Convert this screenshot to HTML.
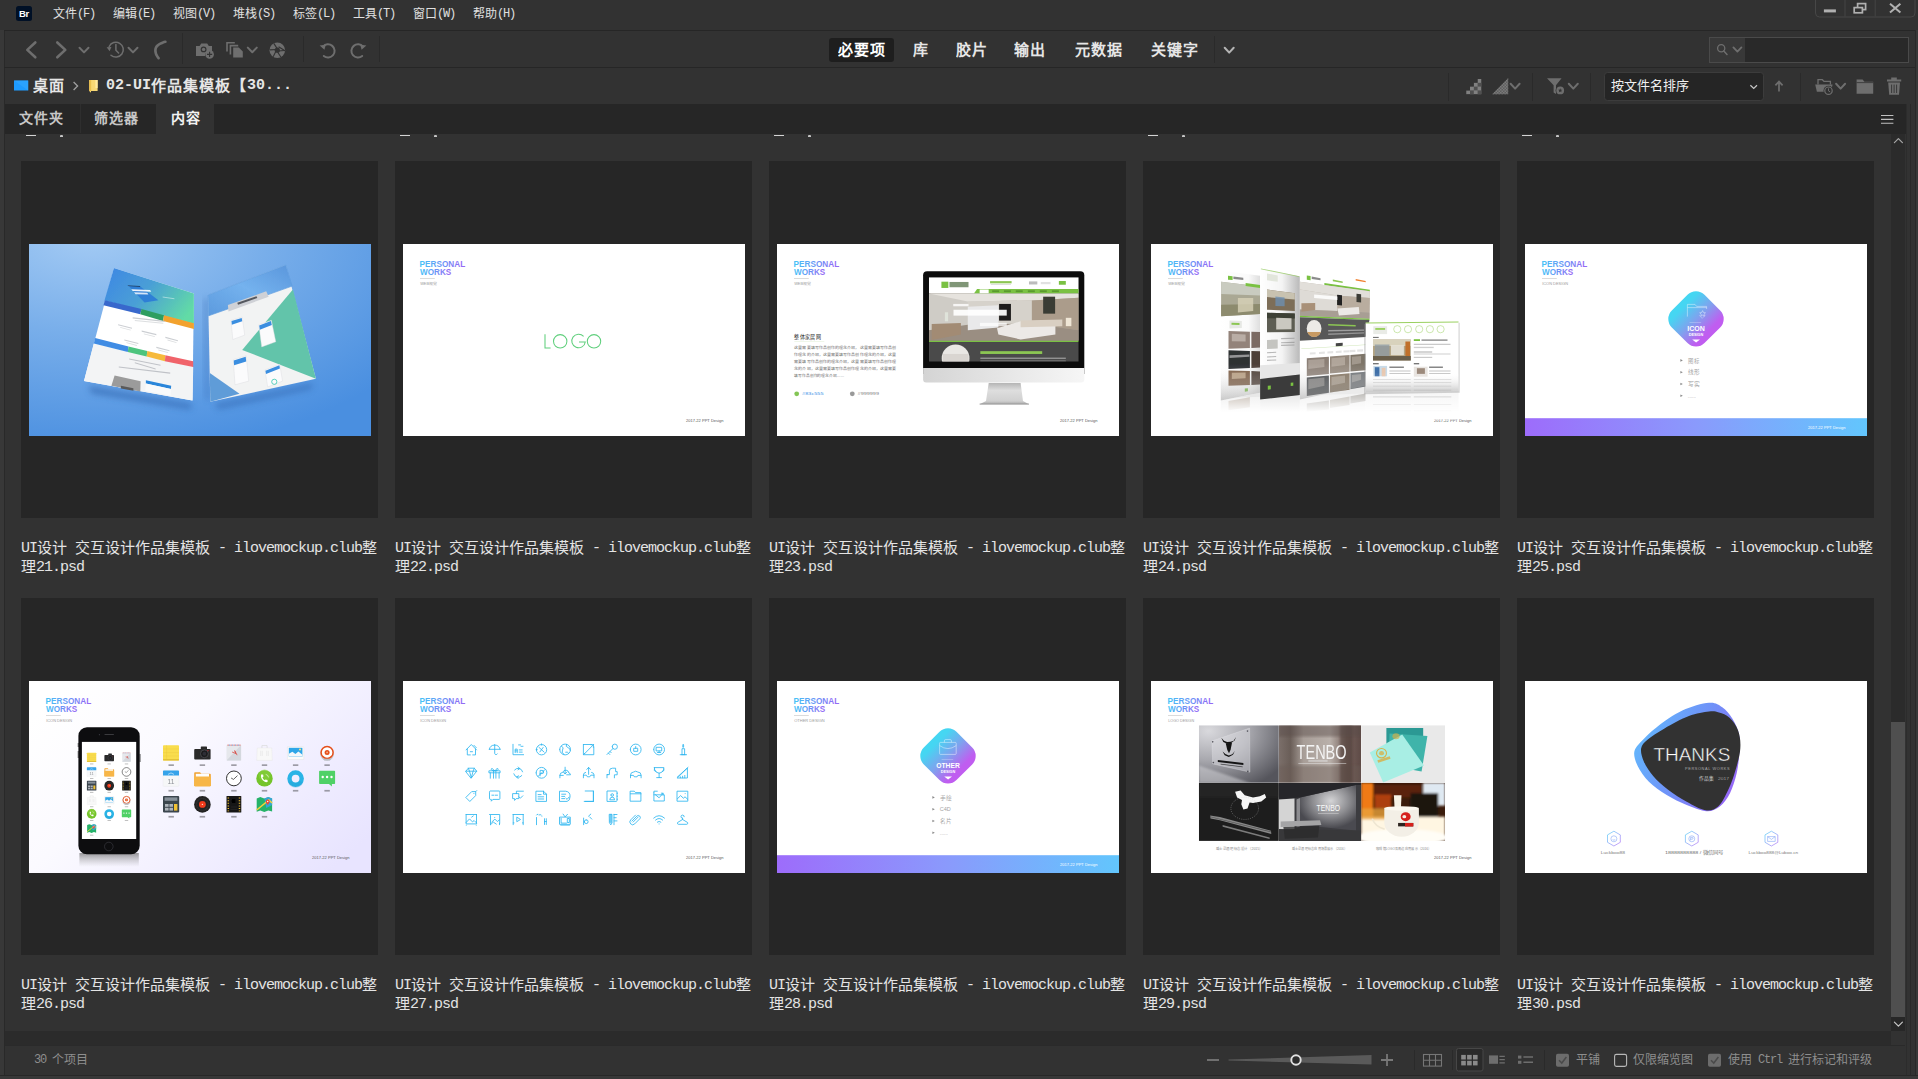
<!DOCTYPE html>
<html lang="zh-CN">
<head>
<meta charset="utf-8">
<title>Adobe Bridge</title>
<style>
html,body{margin:0;padding:0;}
body{width:1918px;height:1079px;background:#323232;position:relative;overflow:hidden;
  font-family:"Liberation Mono",monospace;color:#d2d2d2;}
.a{position:absolute;}
.k{display:inline-block;overflow:hidden;white-space:nowrap;vertical-align:top;font-family:"Liberation Sans",sans-serif;letter-spacing:0;text-align:justify;text-align-last:justify;}
svg{position:absolute;display:block;overflow:hidden;}
/* ---- menu ---- */
.menu{left:0;top:0;width:1918px;height:30px;background:#323232;}
.mi{top:6px;height:16px;line-height:16px;font-size:12px;letter-spacing:-1.2px;color:#e0e0e0;white-space:nowrap;}
.mi .k{font-size:12px;height:16px;line-height:16px;}
/* ---- toolbar / path ---- */
.hl{left:4px;width:1912px;height:1px;background:#262626;}
.ws{top:37px;height:25px;line-height:25px;font-size:15px;color:#e6e6e6;white-space:nowrap;font-weight:bold;}
.ws .k{font-size:15px;height:25px;line-height:25px;}
.path{top:76px;height:20px;line-height:20px;font-size:15px;color:#e6e6e6;white-space:nowrap;font-weight:bold;}
.path .k{font-size:15px;height:20px;line-height:20px;}
/* ---- tabs ---- */
.tabbar{left:5px;top:104px;width:1901px;height:30px;background:#262626;}
.tab{top:104px;height:30px;line-height:29px;font-size:14px;color:#c4c4c4;text-align:center;white-space:nowrap;font-weight:bold;}
.tab .k{font-size:14px;height:30px;line-height:29px;}
/* ---- grid ---- */
.cell{width:357px;height:357px;background:#262626;}
.lbl{width:372px;height:38px;line-height:19px;font-size:15px;letter-spacing:-1px;color:#e4e4e4;white-space:nowrap;overflow:hidden;}
.lbl .k{font-size:15px;height:19px;line-height:19px;position:relative;top:-1px;}
.th{width:342px;height:192px;background:#fff;overflow:hidden;}
.th svg{left:0;top:0;}
/* ---- status ---- */
.st{top:1052px;height:16px;line-height:16px;font-size:12px;letter-spacing:-1.2px;color:#8e8e8e;white-space:nowrap;}
.st .k{font-size:12px;height:16px;line-height:16px;}

</style>
</head>
<body>
<div class="a menu"></div>
<div class="a" style="left:16px;top:6px;width:16px;height:15px;background:#001026;border-radius:2.5px;"></div>
<div class="a" style="left:19px;top:9px;width:12px;height:10px;line-height:10px;font-family:'Liberation Sans',sans-serif;font-weight:bold;font-size:9.5px;color:#fff;letter-spacing:-0.3px;">Br</div>
<div class="a mi" style="left:53px;"><span class="k" style="width:24px">文件</span>(F)</div>
<div class="a mi" style="left:113px;"><span class="k" style="width:24px">编辑</span>(E)</div>
<div class="a mi" style="left:173px;"><span class="k" style="width:24px">视图</span>(V)</div>
<div class="a mi" style="left:233px;"><span class="k" style="width:24px">堆栈</span>(S)</div>
<div class="a mi" style="left:293px;"><span class="k" style="width:24px">标签</span>(L)</div>
<div class="a mi" style="left:353px;"><span class="k" style="width:24px">工具</span>(T)</div>
<div class="a mi" style="left:413px;"><span class="k" style="width:24px">窗口</span>(W)</div>
<div class="a mi" style="left:473px;"><span class="k" style="width:24px">帮助</span>(H)</div>
<svg class="a" style="left:1813px;top:0px" width="104" height="20" viewBox="0 0 104 20"><path d="M2.5 -1 V13 Q2.5 17 6.5 17 H98 Q102 17 102 13 V-1" fill="#323232" stroke="#474747" stroke-width="1"/><path d="M32 0 V16.5 M62.2 0 V16.5" stroke="#444" stroke-width="1"/><rect x="10.9" y="9.4" width="12" height="3" fill="#b0b0b0"/><rect x="44.6" y="3.6" width="8" height="6" fill="none" stroke="#b0b0b0" stroke-width="1.7"/><rect x="41.2" y="7.6" width="8.2" height="5.2" fill="#323232" stroke="#b0b0b0" stroke-width="1.7"/><path d="M77 3.8 L87.4 12.6 M87.4 3.8 L77 12.6" stroke="#b0b0b0" stroke-width="2"/></svg>
<div class="a" style="left:0;top:30px;width:4px;height:1049px;background:#383838;"></div>
<div class="a" style="left:4px;top:30px;width:1px;height:1046px;background:#292929;"></div>
<div class="a hl" style="top:30px;"></div>
<div class="a hl" style="top:67px;"></div>
<svg class="a" style="left:0px;top:30px" width="400" height="38" viewBox="0 0 400 38"><path d="M35.3 12.5 L27.3 19.9 L35.3 27.3" fill="none" stroke="#6e6e6e" stroke-width="2.6" stroke-linecap="round" stroke-linejoin="round" /><path d="M57.3 12.5 L65.3 19.9 L57.3 27.3" fill="none" stroke="#6e6e6e" stroke-width="2.6" stroke-linecap="round" stroke-linejoin="round" /><path d="M79.5 17.8 L84 22.4 L88.5 17.8" fill="none" stroke="#6e6e6e" stroke-width="2" stroke-linecap="round" stroke-linejoin="round"/><path d="M109.2 16.5 A7.4 7.4 0 1 1 111 25.2" fill="none" stroke="#6e6e6e" stroke-width="1.5" stroke-linecap="round" stroke-linejoin="round" /><path d="M106.6 17.2 L111.4 17 L109.6 21.2 Z" fill="#6e6e6e"/><path d="M115.9 14.5 V20.2 L118.6 23" fill="none" stroke="#6e6e6e" stroke-width="1.5" stroke-linecap="round" stroke-linejoin="round" /><path d="M128.5 17.8 L133 22.4 L137.5 17.8" fill="none" stroke="#6e6e6e" stroke-width="2" stroke-linecap="round" stroke-linejoin="round"/><path d="M165.4 11.8 Q155.2 14.4 155.4 20.6 Q155.6 24.6 158.6 28.2" fill="none" stroke="#6e6e6e" stroke-width="2.7" stroke-linecap="round" stroke-dasharray="2.4 .5"/><path d="M182.5 3 V34" stroke="#2a2a2a" stroke-width="1"/><path d="M196 16 h3.6 l1.6 -2.4 h6 l1.6 2.4 h3.2 v5.2 a5 5 0 0 0 -7 4.8 h-9 z" fill="#6e6e6e"/><circle cx="203.6" cy="19.4" r="2.9" fill="#323232"/><circle cx="203.6" cy="19.4" r="1.7" fill="#6e6e6e"/><circle cx="209.6" cy="24.4" r="4.3" fill="#6e6e6e"/><path d="M209.6 21.8 v5.2 M207 24.4 h5.2" stroke="#323232" stroke-width="1.1"/><path d="M226.2 12 h8.6 v1.6 h-7 v8 h-1.6 z" fill="#6e6e6e"/><path d="M229.6 14.8 h8.6 v1.6 h-7 v8.2 h-1.6 z" fill="#6e6e6e"/><path d="M233.2 17.4 h5.6 l4 4 v6 h-9.6 z" fill="#6e6e6e"/><path d="M247.8 17.6 L252.3 22.2 L256.8 17.6" fill="none" stroke="#6e6e6e" stroke-width="2" stroke-linecap="round" stroke-linejoin="round"/><circle cx="277.3" cy="20.2" r="7.8" fill="#6e6e6e"/><g stroke="#323232" stroke-width="1.1" fill="none"><path d="M273.8 13.4 L277.8 19.6"/><path d="M281.6 13.8 L275 17.4" transform="rotate(60 277.3 20.2)"/><path d="M273.8 13.4 L277.8 19.6" transform="rotate(120 277.3 20.2)"/><path d="M273.8 13.4 L277.8 19.6" transform="rotate(180 277.3 20.2)"/><path d="M273.8 13.4 L277.8 19.6" transform="rotate(240 277.3 20.2)"/><path d="M273.8 13.4 L277.8 19.6" transform="rotate(300 277.3 20.2)"/></g><circle cx="277.3" cy="20.2" r="2.6" fill="#323232"/><path d="M303.5 6 V32" stroke="#2a2a2a" stroke-width="1"/><path d="M323 16.6 A6.6 6.6 0 1 1 323.8 26" fill="none" stroke="#6e6e6e" stroke-width="2" stroke-linecap="round" stroke-linejoin="round" /><path d="M319.6 15.6 L325.8 14.8 L324.4 19.8 Z" fill="#6e6e6e"/><path d="M363 16.6 A6.6 6.6 0 1 0 362.2 26" fill="none" stroke="#6e6e6e" stroke-width="2" stroke-linecap="round" stroke-linejoin="round" /><path d="M366.4 15.6 L360.2 14.8 L361.6 19.8 Z" fill="#6e6e6e"/><path d="M379.5 6 V32" stroke="#2a2a2a" stroke-width="1"/></svg>
<div class="a" style="left:829px;top:38px;width:65px;height:24px;background:#1e1e1e;border-radius:3px;"></div>
<div class="a ws" style="left:838px;width:48px;color:#ffffff;"><span class="k" style="width:16px">必</span><span class="k" style="width:16px">要</span><span class="k" style="width:16px">项</span></div>
<div class="a ws" style="left:912.5px;width:16px;color:#e6e6e6;"><span class="k" style="width:16px">库</span></div>
<div class="a ws" style="left:955.5px;width:32px;color:#e6e6e6;"><span class="k" style="width:16px">胶</span><span class="k" style="width:16px">片</span></div>
<div class="a ws" style="left:1014px;width:32px;color:#e6e6e6;"><span class="k" style="width:16px">输</span><span class="k" style="width:16px">出</span></div>
<div class="a ws" style="left:1074.5px;width:48px;color:#e6e6e6;"><span class="k" style="width:16px">元</span><span class="k" style="width:16px">数</span><span class="k" style="width:16px">据</span></div>
<div class="a ws" style="left:1150.5px;width:48px;color:#e6e6e6;"><span class="k" style="width:16px">关</span><span class="k" style="width:16px">键</span><span class="k" style="width:16px">字</span></div>
<svg class="a" style="left:1205px;top:30px" width="40" height="38" viewBox="0 0 40 38"><path d="M9.5 6 V33" stroke="#2a2a2a" stroke-width="1"/><path d="M19.7 17.8 L24.2 22.6 L28.7 17.8" fill="none" stroke="#b4b4b4" stroke-width="2" stroke-linecap="round" stroke-linejoin="round"/></svg>
<div class="a" style="left:1709px;top:37px;width:200px;height:26px;background:#292929;border:1px solid #4a4a4a;box-sizing:border-box;"></div>
<div class="a" style="left:1710px;top:38px;width:35px;height:24px;background:#383838;"></div>
<svg class="a" style="left:1710px;top:38px" width="36" height="23" viewBox="0 0 36 23"><circle cx="11.2" cy="10.2" r="3.6" fill="none" stroke="#6e6e6e" stroke-width="1.3"/><path d="M13.8 13 L17 16.4" stroke="#6e6e6e" stroke-width="1.5" stroke-linecap="round"/><path d="M23.4 9.4 L27.4 13.6 L31.4 9.4" fill="none" stroke="#6e6e6e" stroke-width="1.8" stroke-linecap="round" stroke-linejoin="round"/></svg>
<svg class="a" style="left:12px;top:76px" width="20" height="18" viewBox="0 0 20 18"><path d="M2 4.5 h14.2 v10 h-14.2 z" fill="#1e9bff"/><path d="M2 4.5 h14.2 v10 z" fill="#35a8ff" opacity=".55"/></svg>
<div class="a path" style="left:33px;"><span class="k" style="width:16px">桌</span><span class="k" style="width:16px">面</span></div>
<svg class="a" style="left:68px;top:76px" width="16" height="20" viewBox="0 0 16 20"><path d="M5.6 6 L9.6 10 L5.6 14" fill="none" stroke="#a0a0a0" stroke-width="1.3"/></svg>
<svg class="a" style="left:86px;top:76px" width="16" height="20" viewBox="0 0 16 20"><path d="M3.2 4 h8.4 v11 h-6.6 v1.8 l-1.8 -1.8 z" fill="#f7d774"/><path d="M3.2 4 h2 v11 h-2 z" fill="#e9bf4e"/><path d="M9.4 4 h2.2 v8 h-2.2 z" fill="#ffe9a0"/></svg>
<div class="a path" style="left:106px;">02-UI<span class="k" style="width:16px">作</span><span class="k" style="width:16px">品</span><span class="k" style="width:16px">集</span><span class="k" style="width:16px">模</span><span class="k" style="width:16px">板</span><span class="k" style="width:16px">【</span>30...</div>
<svg class="a" style="left:1440px;top:68px" width="470" height="36" viewBox="0 0 470 36"><path d="M8.5 5 V33 M92.5 5 V33 M150.5 5 V33 M360.5 5 V33" stroke="#2a2a2a" stroke-width="1"/><defs><pattern id="ck" width="3" height="3" patternUnits="userSpaceOnUse"><rect width="1.5" height="1.5" fill="#7a7a7a"/><rect x="1.5" y="1.5" width="1.5" height="1.5" fill="#7a7a7a"/></pattern><pattern id="ck2" x="26.2" y="11" width="7.6" height="7.6" patternUnits="userSpaceOnUse"><rect width="7.6" height="7.6" fill="#505050"/><rect x="3.8" width="3.8" height="3.8" fill="#808080"/><rect y="3.8" width="3.8" height="3.8" fill="#808080"/></pattern></defs><path d="M26.2 26.2 V22.4 H30 V18.6 H33.8 V14.8 H37.6 V11 H41.4 V26.2 Z" fill="url(#ck2)"/><path d="M52.2 26.2 L68.2 10.1 V26.2 Z" fill="#5e5e5e"/><path d="M52.2 26.2 L68.2 10.1 V26.2 Z" fill="url(#ck)"/><path d="M70.6 15.8 L75.1 20.6 L79.6 15.8" fill="none" stroke="#6e6e6e" stroke-width="2" stroke-linecap="round" stroke-linejoin="round"/><path d="M107 10.2 h14.6 l-5.6 7 v8.8 l-2.4 -1.6 v-7.2 z" fill="#6e6e6e"/><circle cx="120.2" cy="22.4" r="4.6" fill="#323232"/><circle cx="120.2" cy="22.4" r="3.9" fill="#6e6e6e"/><path d="M120.2 20.3 l.6 1.4 1.5.15 -1.1 1 .3 1.5 -1.3-.8 -1.3.8 .3-1.5 -1.1-1 1.5-.15z" fill="#323232"/><path d="M128.8 15.8 L133.3 20.6 L137.8 15.8" fill="none" stroke="#6e6e6e" stroke-width="2" stroke-linecap="round" stroke-linejoin="round"/><rect x="164.5" y="4.5" width="159" height="28" rx="3" fill="#252525" stroke="#3c3c3c" stroke-width="1"/><path d="M310.4 17.2 L313.7 20.4 L317 17.2" fill="none" stroke="#c8c8c8" stroke-width="1.2"/><path d="M339 23.5 V14 M335.4 17.4 L339 13.6 L342.6 17.4" fill="none" stroke="#6e6e6e" stroke-width="1.7"/><path d="M378 16.4 V11.7 h4.4 l1.6 1.7 h6.4 v3" fill="none" stroke="#6e6e6e" stroke-width="1.3"/><path d="M375.2 16.5 h17.4 l-1.7 7.2 h-14 z" fill="#6e6e6e"/><circle cx="388.5" cy="22.7" r="5" fill="#323232"/><circle cx="388.5" cy="22.7" r="3.7" fill="none" stroke="#6e6e6e" stroke-width="1.2"/><path d="M388.5 20.4 V22.9 L390.2 23.9" fill="none" stroke="#6e6e6e" stroke-width="1"/><path d="M396.1 15.8 L400.6 20.6 L405.1 15.8" fill="none" stroke="#6e6e6e" stroke-width="2" stroke-linecap="round" stroke-linejoin="round"/><path d="M416.6 11.6 h6 l1.8 2.2 h8.8 v12 h-16.6 z" fill="#6e6e6e"/><path d="M416.6 14.6 h16.6" stroke="#323232" stroke-width=".8"/><path d="M447 11.6 h4.2 v-2 h5.6 v2 h4.4 v2 h-14.2 z" fill="#6e6e6e"/><path d="M448.2 14.6 h11.8 l-1 12.2 h-9.8 z" fill="#6e6e6e"/><path d="M451.6 16.6 v8.4 M454.1 16.6 v8.4 M456.6 16.6 v8.4" stroke="#323232" stroke-width=".9"/></svg>
<div class="a" style="left:1611px;top:78px;height:16px;line-height:16px;font-size:13px;color:#f0f0f0;white-space:nowrap;"><span class="k" style="width:78px">按文件名排序</span></div>
<div class="a tabbar"></div>
<div class="a" style="left:80px;top:104px;width:1px;height:29px;background:#2e2e2e;"></div>
<div class="a" style="left:156px;top:104px;width:58px;height:30px;background:#323232;"></div>
<div class="a tab" style="left:19px;width:45px;color:#c6c6c6;text-align:left;"><span class="k" style="width:15px">文</span><span class="k" style="width:15px">件</span><span class="k" style="width:15px">夹</span></div>
<div class="a tab" style="left:94px;width:45px;color:#c6c6c6;text-align:left;"><span class="k" style="width:15px">筛</span><span class="k" style="width:15px">选</span><span class="k" style="width:15px">器</span></div>
<div class="a tab" style="left:171px;width:30px;color:#f2f2f2;text-align:left;"><span class="k" style="width:15px">内</span><span class="k" style="width:15px">容</span></div>
<svg class="a" style="left:1878px;top:112px" width="20" height="14" viewBox="0 0 20 14"><path d="M3 3.5 h12.4 M3 7.4 h12.4 M3 11.3 h12.4" stroke="#c0c0c0" stroke-width="1.1"/></svg>
<div class="a" style="left:1891px;top:134px;width:14px;height:897px;background:#2b2b2b;"></div>
<div class="a" style="left:1891px;top:722px;width:14px;height:295px;background:#4f4f4f;"></div><div class="a" style="left:1891px;top:1017px;width:14px;height:14px;background:#272727;"></div>
<svg class="a" style="left:1891px;top:134px" width="14" height="14" viewBox="0 0 14 14"><path d="M3.4 8.6 L7.4 4.6 L11.4 8.6" fill="none" stroke="#a8a8a8" stroke-width="1.2" stroke-linecap="round" stroke-linejoin="round"/></svg>
<svg class="a" style="left:1891px;top:1017px" width="14" height="14" viewBox="0 0 14 14"><path d="M3.4 5.2 L7.4 9.2 L11.4 5.2" fill="none" stroke="#c8c8c8" stroke-width="1.2" stroke-linecap="round" stroke-linejoin="round"/></svg>
<div class="a" style="left:1916px;top:30px;width:2px;height:1049px;background:#383838;"></div>
<div class="a" style="left:1915px;top:30px;width:1px;height:1046px;background:#292929;"></div>
<div class="a" style="left:1910px;top:104px;width:1px;height:972px;background:#292929;"></div>
<div class="a" style="left:1906px;top:104px;width:1px;height:972px;background:#2c2c2c;"></div>
<div class="a" style="left:5px;top:1031px;width:1886px;height:14px;background:#2b2b2b;"></div>
<div class="a" style="left:5px;top:1045px;width:1900px;height:1px;background:#2a2a2a;"></div>
<div class="a" style="left:0;top:1075px;width:1918px;height:1px;background:#282828;"></div>
<div class="a" style="left:0;top:1076px;width:1918px;height:3px;background:#383838;"></div>
<div class="a st" style="left:34px;">30&nbsp;<span class="k" style="width:36px">个项目</span></div>
<svg class="a" style="left:1200px;top:1046px" width="700" height="29" viewBox="0 0 700 29"><path d="M7 14 h12" stroke="#787878" stroke-width="1.8"/><path d="M28.5 13.6 L171.5 9 V18.4 L28.5 14.6 Z" fill="#5a5a5a"/><circle cx="96" cy="14" r="4.7" fill="#2c2c2c" stroke="#e0e0e0" stroke-width="1.9"/><path d="M181 14 h12 M187 8 v12" stroke="#787878" stroke-width="1.8"/><path d="M214.5 4 V24 M252.5 4 V24 M344.5 4 V24" stroke="#2a2a2a" stroke-width="1"/><rect x="223.5" y="8.5" width="18" height="11.6" fill="none" stroke="#767676" stroke-width="1.1"/><path d="M223.5 14.3 h18 M229.5 8.5 v11.6 M235.5 8.5 v11.6" stroke="#767676" stroke-width="1.1"/><rect x="256.5" y="2.5" width="26.5" height="22.5" rx="2" fill="#2a2a2a" stroke="#474747" stroke-width="1"/><rect x="261.2" y="8.9" width="4.6" height="4.6" fill="#8a8a8a"/><rect x="267.1" y="8.9" width="4.6" height="4.6" fill="#8a8a8a"/><rect x="273" y="8.9" width="4.6" height="4.6" fill="#8a8a8a"/><rect x="261.2" y="14.8" width="4.6" height="4.6" fill="#8a8a8a"/><rect x="267.1" y="14.8" width="4.6" height="4.6" fill="#8a8a8a"/><rect x="273" y="14.8" width="4.6" height="4.6" fill="#8a8a8a"/><rect x="289" y="9.4" width="9" height="8.4" fill="#6e6e6e"/><path d="M299.4 10.4 h5.4 M299.4 13.6 h5.4 M299.4 16.8 h5.4" stroke="#6e6e6e" stroke-width="1.3"/><rect x="318" y="9.6" width="3.4" height="3" fill="#6e6e6e"/><rect x="318" y="14.8" width="3.4" height="3" fill="#6e6e6e"/><path d="M323.4 11.1 h9.6 M323.4 16.3 h9.6" stroke="#6e6e6e" stroke-width="1.5"/><rect x="356" y="7.8" width="13" height="13" rx="1.8" fill="#6c6c6c"/><path d="M359 14.2 L361.8 17 L366.4 11" fill="none" stroke="#4a4a4a" stroke-width="1.5"/><rect x="414.6" y="8.4" width="12" height="12" rx="1.8" fill="none" stroke="#b8b8b8" stroke-width="1.1"/><rect x="508" y="7.8" width="13" height="13" rx="1.8" fill="#6c6c6c"/><path d="M511 14.2 L513.8 17 L518.4 11" fill="none" stroke="#4a4a4a" stroke-width="1.5"/></svg>
<div class="a st" style="left:1576px;"><span class="k" style="width:24px">平铺</span></div>
<div class="a st" style="left:1633px;"><span class="k" style="width:60px">仅限缩览图</span></div>
<div class="a st" style="left:1728px;"><span class="k" style="width:24px">使用</span>&nbsp;Ctrl&nbsp;<span class="k" style="width:84px">进行标记和评级</span></div>
<div class="a" style="left:26px;top:135px;width:10px;height:1px;background:#d4d4d4;"></div><div class="a" style="left:60px;top:135px;width:3px;height:2px;background:#c4c4c4;border-radius:1px 1px 0 0;"></div>
<div class="a" style="left:400px;top:135px;width:10px;height:1px;background:#d4d4d4;"></div><div class="a" style="left:434px;top:135px;width:3px;height:2px;background:#c4c4c4;border-radius:1px 1px 0 0;"></div>
<div class="a" style="left:774px;top:135px;width:10px;height:1px;background:#d4d4d4;"></div><div class="a" style="left:808px;top:135px;width:3px;height:2px;background:#c4c4c4;border-radius:1px 1px 0 0;"></div>
<div class="a" style="left:1148px;top:135px;width:10px;height:1px;background:#d4d4d4;"></div><div class="a" style="left:1182px;top:135px;width:3px;height:2px;background:#c4c4c4;border-radius:1px 1px 0 0;"></div>
<div class="a" style="left:1522px;top:135px;width:10px;height:1px;background:#d4d4d4;"></div><div class="a" style="left:1556px;top:135px;width:3px;height:2px;background:#c4c4c4;border-radius:1px 1px 0 0;"></div>
<div class="a cell" style="left:21px;top:161px;"></div>
<div class="a th" style="left:29px;top:244px;"><svg width="342" height="192" viewBox="0 0 342 192"><defs><radialGradient id="t21bg" cx=".18" cy="-.05" r="1.15"><stop offset="0" stop-color="#a4cbf4"/><stop offset=".45" stop-color="#78aeea"/><stop offset="1" stop-color="#4a8fe0"/></radialGradient><linearGradient id="t21h" x1="0" y1=".2" x2="1" y2=".7"><stop offset="0" stop-color="#3f8ae2"/><stop offset=".45" stop-color="#4a9fd6"/><stop offset="1" stop-color="#62dba6"/></linearGradient><linearGradient id="t21r" x1="0" y1="1" x2="1" y2="0"><stop offset="0" stop-color="#5c9ade"/><stop offset=".5" stop-color="#74b2ee"/><stop offset="1" stop-color="#5a96dc"/></linearGradient><filter id="t21f" x="-20%" y="-50%" width="140%" height="200%"><feGaussianBlur stdDeviation="3"/></filter><filter id="t21s" x="-5%" y="-5%" width="110%" height="110%"><feGaussianBlur stdDeviation=".35"/></filter></defs><rect width="342" height="192" fill="url(#t21bg)"/><polygon points="59.2,141.8 162.8,159.9 161.4,165.5 62.7,149.5" fill="#2c5fa8" opacity=".55" filter="url(#t21f)"/><polygon points="185.3,160.0 284.6,139.3 281.7,145.2 189.7,165.2" fill="#2c5fa8" opacity=".5" filter="url(#t21f)"/><polygon points="174.9,55.5 179.6,54.0 180.8,157.8 176.4,153.4" fill="#2c5fa8" opacity=".35" filter="url(#t21f)"/><g filter="url(#t21s)"><polygon points="84.9,24.1 164.9,49.4 163.5,156.4 55.0,137.0" fill="#ffffff" /><polygon points="84.9,24.1 164.9,49.4 164.9,79.7 75.5,56.6" fill="url(#t21h)" /><polygon points="75.9,56.3 112.5,64.9 111.3,70.2 74.5,61.2" fill="#3768cc" /><polygon points="112.5,64.9 135.0,71.3 134.1,76.9 111.3,70.2" fill="#2f9e60" /><polygon points="135.0,71.3 164.9,79.3 164.9,85.1 134.1,76.9" fill="#f2a22e" /><polygon points="99.5,41.7 111.3,42.4 129.4,56.3 115.5,58.4" fill="#2f7fd6" /><polygon points="102.3,45.2 121.1,45.9 122.2,47.7 103.7,47.1" fill="#ffffff" opacity=".9"/><polygon points="105.1,48.3 118.3,48.8 119.4,50.5 106.5,50.2" fill="#ffffff" opacity=".8"/><polygon points="98.8,41.4 111.1,42.0 111.1,42.7 98.8,42.1" fill="#1c2b44" /><polygon points="133.6,52.4 145.4,54.2 145.4,55.2 133.6,53.5" fill="#ffffff" opacity=".45"/><polygon points="103.7,73.3 135.7,76.8 135.7,77.9 103.7,74.4" fill="#b4b8be" opacity=".7"/><polygon points="105.8,76.1 134.3,78.8 134.3,79.7 105.8,76.9" fill="#c4c8cc" opacity=".6"/><polygon points="89.1,80.2 103.0,83.7 103.0,84.8 89.1,81.3" fill="#b4b8be" opacity=".7"/><polygon points="91.2,83.0 101.6,85.8 101.6,86.6 91.2,83.8" fill="#c4c8cc" opacity=".6"/><polygon points="112.7,86.6 127.3,90.1 127.3,91.2 112.7,87.7" fill="#b4b8be" opacity=".7"/><polygon points="114.8,89.4 125.9,92.2 125.9,93.0 114.8,90.2" fill="#c4c8cc" opacity=".6"/><polygon points="136.4,92.7 148.9,96.2 148.9,97.3 136.4,93.9" fill="#b4b8be" opacity=".7"/><polygon points="138.5,95.5 147.5,98.3 147.5,99.1 138.5,96.4" fill="#c4c8cc" opacity=".6"/><polygon points="95.4,95.5 109.3,99.0 109.3,100.1 95.4,96.6" fill="#b4b8be" opacity=".7"/><polygon points="97.4,98.3 107.9,101.1 107.9,101.9 97.4,99.1" fill="#c4c8cc" opacity=".6"/><polygon points="127.3,102.8 140.5,106.2 140.5,107.3 127.3,103.9" fill="#b4b8be" opacity=".7"/><polygon points="129.4,105.5 139.1,108.3 139.1,109.1 129.4,106.4" fill="#c4c8cc" opacity=".6"/><polygon points="64.8,99.4 164.2,123.0 163.5,156.4 55.0,137.0" fill="#f3f4f5" /><polygon points="66.2,94.1 99.5,102.5 98.8,108.0 64.8,99.4" fill="#3f8ce4" /><polygon points="99.5,102.5 118.3,107.1 117.7,112.6 98.8,108.0" fill="#4dc47d" /><polygon points="118.3,107.1 136.4,111.2 135.9,117.2 117.7,112.6" fill="#f6b93b" /><polygon points="136.4,111.2 164.2,117.2 164.2,123.0 135.9,117.2" fill="#f0636b" /><polygon points="100.2,114.4 131.5,120.7 131.5,121.8 100.2,115.5" fill="#a9adb4" opacity=".7"/><polygon points="105.8,118.2 126.6,124.4 126.6,125.6 105.8,119.3" fill="#a9adb4" opacity=".7"/><polygon points="89.8,122.4 141.2,128.6 141.2,129.7 89.8,123.5" fill="#a9adb4" opacity=".7"/><polygon points="85.6,131.4 111.6,137.2 111.3,147.4 82.4,141.8" fill="#9b9b9b" /><polygon points="91.9,141.8 104.4,144.2 104.4,146.7 91.9,144.6" fill="#5a5a5a" /><polygon points="116.9,136.3 142.2,141.8 141.9,145.0 116.9,139.5" fill="#2a86da" /><polygon points="116.9,139.5 141.9,145.0 141.6,151.5 116.2,146.7" fill="#f9fafb" /><polygon points="179.1,51.0 256.8,21.1 286.9,134.8 181.3,157.8" fill="#f2f3f3" /><polygon points="179.1,51.0 256.8,21.1 263.1,42.1 179.6,71.8" fill="url(#t21r)" stroke="#609ee0" stroke-width=".7"/><polygon points="263.9,45.4 213.2,105.9 286.9,134.8" fill="#62c4aa" /><polygon points="180.8,128.9 210.5,149.7 181.3,157.8" fill="#5f9cd8" /><polygon points="198.9,61.1 237.2,47.3 239.7,52.8 199.5,67.4" fill="#cfd1d6" /><polygon points="208.3,58.8 227.5,52.2 228.3,54.0 209.0,60.7" fill="#55585e" /><polygon points="202.0,76.3 213.2,73.0 215.7,91.1 203.8,95.5" fill="#fbfbfc" stroke="#d8dadd" stroke-width=".4"/><polygon points="202.5,77.1 212.7,73.9 213.2,77.2 202.8,80.7" fill="#3a8ee0" /><polygon points="229.8,80.7 242.4,76.3 246.8,97.8 232.7,102.9" fill="#fbfbfc" stroke="#d8dadd" stroke-width=".4"/><polygon points="230.2,81.6 241.9,77.1 242.8,81.1 230.8,85.7" fill="#3a8ee0" /><polygon points="204.3,115.6 217.2,111.8 219.7,137.1 206.0,140.8" fill="#fbfbfc" stroke="#d8dadd" stroke-width=".4"/><polygon points="204.7,116.4 216.7,112.7 217.2,117.5 205.1,121.2" fill="#3a8ee0" /><polygon points="236.0,125.9 250.8,120.4 253.5,137.1 238.7,143.0" fill="#fbfbfc" stroke="#d8dadd" stroke-width=".4"/><polygon points="236.4,126.8 250.4,121.3 250.9,124.4 237.0,129.9" fill="#3a8ee0" /><circle cx="245.3" cy="137.8" r="2.6" fill="none" stroke="#35c7b0" stroke-width=".8"/></g></svg></div>
<div class="a lbl" style="left:21px;top:539px;">UI<span class="k" style="width:30px">设计</span>&nbsp;<span class="k" style="width:135px">交互设计作品集模板</span>&nbsp;-&nbsp;ilovemockup.club<span class="k" style="width:15px">整</span><br><span class="k" style="width:15px">理</span>21.psd</div>
<div class="a cell" style="left:395px;top:161px;"></div>
<div class="a th" style="left:403px;top:244px;"><svg width="342" height="192" viewBox="0 0 342 192"><defs><linearGradient id="t22g" x1="0" y1="0" x2="1" y2="0"><stop offset="0" stop-color="#46c4f6"/><stop offset=".55" stop-color="#6f8ef6"/><stop offset="1" stop-color="#9966f5"/></linearGradient></defs><g fill="url(#t22g)" font-family="Liberation Sans, sans-serif" font-weight="bold" font-size="8.7"><text x="16.6" y="22.5" textLength="45.6" lengthAdjust="spacingAndGlyphs">PERSONAL</text><text x="17" y="30.6" textLength="31.2" lengthAdjust="spacingAndGlyphs">WORKS</text></g><rect x="17" y="34.2" width="14.8" height=".6" fill="#c4c4c4"/><text x="17.2" y="40.6" font-family="Liberation Sans, sans-serif" font-size="3.6" fill="#9a9a9a" textLength="17.5" lengthAdjust="spacingAndGlyphs">WEB视觉</text><text x="283" y="178" font-family="Liberation Sans, sans-serif" font-size="3.9" fill="#5a5a5a" textLength="37.5" lengthAdjust="spacingAndGlyphs">2017-22 PPT Design</text><g fill="none" stroke="#5fcf7c" stroke-width="1.05"><path d="M142 90.2 V104 H147.6"/><circle cx="157.2" cy="97.3" r="6.7"/><path d="M180.6 92.4 A6.8 6.8 0 1 0 182.3 98 H176"/><circle cx="191" cy="97.3" r="6.7"/></g></svg></div>
<div class="a lbl" style="left:395px;top:539px;">UI<span class="k" style="width:30px">设计</span>&nbsp;<span class="k" style="width:135px">交互设计作品集模板</span>&nbsp;-&nbsp;ilovemockup.club<span class="k" style="width:15px">整</span><br><span class="k" style="width:15px">理</span>22.psd</div>
<div class="a cell" style="left:769px;top:161px;"></div>
<div class="a th" style="left:777px;top:244px;"><svg width="342" height="192" viewBox="0 0 342 192"><defs><linearGradient id="t23g" x1="0" y1="0" x2="1" y2="0"><stop offset="0" stop-color="#46c4f6"/><stop offset=".55" stop-color="#6f8ef6"/><stop offset="1" stop-color="#9966f5"/></linearGradient></defs><g fill="url(#t23g)" font-family="Liberation Sans, sans-serif" font-weight="bold" font-size="8.7"><text x="16.6" y="22.5" textLength="45.6" lengthAdjust="spacingAndGlyphs">PERSONAL</text><text x="17" y="30.6" textLength="31.2" lengthAdjust="spacingAndGlyphs">WORKS</text></g><rect x="17" y="34.2" width="14.8" height=".6" fill="#c4c4c4"/><text x="17.2" y="40.6" font-family="Liberation Sans, sans-serif" font-size="3.6" fill="#9a9a9a" textLength="17.5" lengthAdjust="spacingAndGlyphs">WEB视觉</text><text x="283" y="178" font-family="Liberation Sans, sans-serif" font-size="3.9" fill="#5a5a5a" textLength="37.5" lengthAdjust="spacingAndGlyphs">2017-22 PPT Design</text><defs><linearGradient id="t23c" x1="0" y1="0" x2="1" y2="0"><stop offset="0" stop-color="#d4d4d4"/><stop offset=".5" stop-color="#e6e6e6"/><stop offset="1" stop-color="#f6f6f6"/></linearGradient><linearGradient id="t23s" x1="0" y1="0" x2="0" y2="1"><stop offset="0" stop-color="#b4b4b4"/><stop offset=".35" stop-color="#dedede"/><stop offset=".85" stop-color="#d0d0d0"/><stop offset="1" stop-color="#a8a8a8"/></linearGradient><clipPath id="t23k"><rect x="151.9" y="33.2" width="149.8" height="84.4"/></clipPath><filter id="t23b"><feGaussianBlur stdDeviation=".5"/></filter></defs><text x="17.3" y="95" font-family="Liberation Sans, sans-serif" font-size="5.6" fill="#2c2c2c" textLength="27" lengthAdjust="spacingAndGlyphs">整体家居网</text><rect x="17.3" y="97.4" width="30" height=".4" fill="#d8e8c8"/><text x="17.3" y="104.6" font-family="Liberation Sans, sans-serif" font-size="3.9" fill="#6c6c6c" textLength="102" lengthAdjust="spacingAndGlyphs">这里需要填写作品创作的理念介绍，这里需要填写作品创</text><text x="17.3" y="111.6" font-family="Liberation Sans, sans-serif" font-size="3.9" fill="#6c6c6c" textLength="102" lengthAdjust="spacingAndGlyphs">作理念的介绍，这里需要填写作品创作理念的介绍，这里</text><text x="17.3" y="118.7" font-family="Liberation Sans, sans-serif" font-size="3.9" fill="#6c6c6c" textLength="102" lengthAdjust="spacingAndGlyphs">需要填写作品创作的理念介绍，这里需要填写作品创作理</text><text x="17.3" y="125.8" font-family="Liberation Sans, sans-serif" font-size="3.9" fill="#6c6c6c" textLength="102" lengthAdjust="spacingAndGlyphs">念的介绍，这里需要填写作品创作理念的介绍，这里需要</text><text x="17.3" y="132.8" font-family="Liberation Sans, sans-serif" font-size="3.9" fill="#6c6c6c" textLength="50" lengthAdjust="spacingAndGlyphs">填写作品创作的理念介绍……</text><circle cx="19.7" cy="149.8" r="2.4" fill="#83c555"/><text x="25.1" y="151.3" font-family="Liberation Sans, sans-serif" font-size="4.2" fill="#3a8fe6" textLength="21.4" lengthAdjust="spacingAndGlyphs">#83c555</text><circle cx="75.3" cy="149.8" r="2.4" fill="#999"/><text x="80.6" y="151.3" font-family="Liberation Sans, sans-serif" font-size="4.2" fill="#808080" textLength="21.4" lengthAdjust="spacingAndGlyphs">#999999</text><path d="M146.1 130 V31.3 a4 4 0 0 1 4 -4 H303.3 a4 4 0 0 1 4 4 V130 Z" fill="#0c0c0c"/><path d="M146.1 123.9 H307.3 V135.5 a3 3 0 0 1 -3 3 H149.1 a3 3 0 0 1 -3 -3 Z" fill="url(#t23c)"/><path d="M211.7 138.9 H243.6 L246 157 L252 160.2 H202.6 L209 157 Z" fill="url(#t23s)"/><rect x="202.6" y="159.6" width="49.4" height=".9" fill="#9c9c9c"/><g clip-path="url(#t23k)"><rect x="151.90" y="33.23" width="149.85" height="16.26" fill="#ffffff" /><rect x="151.90" y="49.50" width="149.85" height="47.26" fill="#b9b0a4" /><polygon points="151.9,49.5 224.2,49.5 224.2,79.4 151.9,86.3" fill="#cfccc6" /><polygon points="151.9,49.5 301.7,49.5 301.7,53.7 254.8,56.4 190.8,57.4" fill="#e6e3de" /><polygon points="254.8,56.4 301.7,53.7 301.7,86.3 254.8,79.4" fill="#ab9c8b" /><polygon points="190.8,57.4 254.8,56.4 254.8,79.4 190.8,80.8" fill="#d6d2cb" /><polygon points="151.9,86.3 190.8,80.8 254.8,79.4 301.7,86.3 301.7,96.8 151.9,96.8" fill="#9a8e82" /><polygon points="190.8,62.7 221.4,61.3 221.4,83.6 190.8,86.3" fill="#e9e9ea" /><rect x="222.10" y="59.92" width="11.82" height="16.68" fill="#1d1b1b" /><rect x="266.16" y="52.69" width="11.95" height="16.96" fill="#3a3c34" /><polygon points="154.7,80.1 183.9,79.1 183.9,90.5 154.7,96.1" fill="#a28b74" /><polygon points="220.0,84.2 243.6,77.3 278.4,76.6 278.4,90.5 243.6,95.4 221.4,90.5" fill="#ece9e6" /><polygon points="243.6,76.6 285.3,75.5 285.3,82.2 243.6,83.3" fill="#d9cfc2" /><rect x="288.82" y="73.82" width="5.56" height="8.34" fill="#efe6d6" /><rect x="167.89" y="68.26" width="3.20" height="9.04" fill="#dfe3da" /><rect x="176.23" y="59.92" width="15.29" height="2.36" fill="#ffffff" opacity=".8"/><rect x="176.50" y="65.76" width="53.24" height="5.84" fill="#ffffff" opacity=".92" filter="url(#t23b)"/><rect x="202.92" y="78.83" width="26.83" height="3.34" fill="#ffffff" opacity=".7"/><rect x="164.41" y="37.68" width="6.95" height="6.26" fill="#7ac143" /><rect x="172.47" y="37.96" width="19.04" height="5.28" fill="#56734a" opacity=".75"/><rect x="213.06" y="37.12" width="21.55" height="2.22" fill="#8cc653" /><rect x="213.76" y="40.18" width="20.16" height="0.70" fill="#b0b0b0" opacity=".6"/><rect x="251.98" y="37.40" width="8.34" height="3.06" fill="#8f8f8f" opacity=".6"/><rect x="263.80" y="37.96" width="9.73" height="2.22" fill="#c4c4c4" opacity=".5"/><rect x="281.87" y="36.99" width="6.95" height="3.75" fill="#7ac143" /><polygon points="197.1,49.2 200.1,45.0 301.7,45.0 301.7,49.2" fill="#7ac143" /><rect x="202.64" y="45.46" width="9.04" height="3.75" fill="#ffffff" /><rect x="215.15" y="46.30" width="6.95" height="1.81" fill="#3f7a1e" opacity=".55"/><rect x="226.96" y="46.30" width="6.95" height="1.81" fill="#3f7a1e" opacity=".55"/><rect x="238.78" y="46.30" width="6.95" height="1.81" fill="#3f7a1e" opacity=".55"/><rect x="250.87" y="46.30" width="6.95" height="1.81" fill="#3f7a1e" opacity=".55"/><rect x="262.83" y="46.30" width="6.95" height="1.81" fill="#3f7a1e" opacity=".55"/><rect x="274.92" y="46.30" width="6.95" height="1.81" fill="#3f7a1e" opacity=".55"/><rect x="151.90" y="96.76" width="149.85" height="1.25" fill="#7ac143" /><rect x="151.90" y="98.01" width="149.85" height="20.29" fill="#4a4a4a" /><circle cx="178.6" cy="114.4" r="13.9" fill="#e9e7e4"/><rect x="165.80" y="109.96" width="25.72" height="8.34" fill="#cfcac4" opacity=".6"/><rect x="203.33" y="107.18" width="61.86" height="2.78" fill="#8cc653" /><rect x="203.33" y="113.58" width="85.49" height="1.39" fill="#b4b4b4" opacity=".7"/><rect x="203.33" y="116.36" width="85.49" height="1.25" fill="#a8a8a8" opacity=".55"/></g></svg></div>
<div class="a lbl" style="left:769px;top:539px;">UI<span class="k" style="width:30px">设计</span>&nbsp;<span class="k" style="width:135px">交互设计作品集模板</span>&nbsp;-&nbsp;ilovemockup.club<span class="k" style="width:15px">整</span><br><span class="k" style="width:15px">理</span>23.psd</div>
<div class="a cell" style="left:1143px;top:161px;"></div>
<div class="a th" style="left:1151px;top:244px;"><svg width="342" height="192" viewBox="0 0 342 192"><defs><linearGradient id="t24g" x1="0" y1="0" x2="1" y2="0"><stop offset="0" stop-color="#46c4f6"/><stop offset=".55" stop-color="#6f8ef6"/><stop offset="1" stop-color="#9966f5"/></linearGradient></defs><g fill="url(#t24g)" font-family="Liberation Sans, sans-serif" font-weight="bold" font-size="8.7"><text x="16.6" y="22.5" textLength="45.6" lengthAdjust="spacingAndGlyphs">PERSONAL</text><text x="17" y="30.6" textLength="31.2" lengthAdjust="spacingAndGlyphs">WORKS</text></g><rect x="17" y="34.2" width="14.8" height=".6" fill="#c4c4c4"/><text x="17.2" y="40.6" font-family="Liberation Sans, sans-serif" font-size="3.6" fill="#9a9a9a" textLength="17.5" lengthAdjust="spacingAndGlyphs">WEB视觉</text><text x="283" y="178" font-family="Liberation Sans, sans-serif" font-size="3.9" fill="#5a5a5a" textLength="37.5" lengthAdjust="spacingAndGlyphs">2017-22 PPT Design</text><defs><linearGradient id="t24a" x1="0" y1="0" x2="1" y2="0"><stop offset="0" stop-color="#fff"/><stop offset=".55" stop-color="#f4f4f4"/><stop offset="1" stop-color="#b9b9b9"/></linearGradient><linearGradient id="t24a2" x1="0" y1="0" x2="1" y2="0"><stop offset="0" stop-color="#fff"/><stop offset=".7" stop-color="#fafafa"/><stop offset="1" stop-color="#dedede"/></linearGradient><linearGradient id="t24v" x1="0" y1="0" x2="0" y2="1"><stop offset="0" stop-color="#fff" stop-opacity="0"/><stop offset=".72" stop-color="#fff" stop-opacity="0"/><stop offset="1" stop-color="#9c9c9c" stop-opacity=".55"/></linearGradient><linearGradient id="t24r" x1="0" y1="0" x2="0" y2="1"><stop offset="0" stop-color="#fff" stop-opacity=".25"/><stop offset=".75" stop-color="#fff" stop-opacity="1"/><stop offset="1" stop-color="#fff" stop-opacity="1"/></linearGradient><filter id="t24f"><feGaussianBlur stdDeviation=".45"/></filter><filter id="t24g" x="-10%" y="-10%" width="120%" height="120%"><feGaussianBlur stdDeviation="1.6"/></filter></defs><g opacity=".85" filter="url(#t24f)"><polygon points="69.8,156.4 109.1,148.7 109.1,174.0 69.8,174.0" fill="#e4e4e4" /><polygon points="109.1,155.6 148.9,151.0 148.9,174.0 109.1,174.0" fill="#d4d4d4" /><polygon points="148.9,155.6 214.7,141.8 214.7,174.0 148.9,174.0" fill="#e8e8e8" /><polygon points="155.8,159.4 177.9,156.4 177.9,165.5 155.8,167.8" fill="#8e8a84" /><polygon points="179.0,155.9 198.6,152.5 198.6,161.0 179.0,164.0" fill="#9a9288" /><polygon points="199.4,152.2 214.7,149.5 214.7,157.1 199.4,159.4" fill="#8e8a84" /><polygon points="77.5,157.1 98.9,153.3 98.9,163.2 77.5,166.3" fill="#a09080" /><polygon points="214.7,148.3 307.5,146.7 307.5,167.8 214.7,167.8" fill="#f0f0f0" /><polygon points="222.0,152.2 259.8,152.2 259.8,153.5 222.0,153.5" fill="#b4b4b4" /><polygon points="262.8,152.2 300.3,152.2 300.3,153.5 262.8,153.5" fill="#b4b4b4" /><polygon points="222.0,159.9 259.8,159.9 259.8,161.1 222.0,161.1" fill="#b4b4b4" /><polygon points="262.8,159.9 300.3,159.9 300.3,161.1 262.8,161.1" fill="#b4b4b4" /><polygon points="222.0,166.3 259.8,166.3 259.8,167.5 222.0,167.5" fill="#b4b4b4" /><polygon points="262.8,166.3 300.3,166.3 300.3,167.5 262.8,167.5" fill="#b4b4b4" /></g><polygon points="68.6,154.1 308.7,146.4 308.7,175.5 68.6,175.5" fill="url(#t24r)" /><g filter="url(#t24f)"><polygon points="69.8,26.4 109.1,31.7 109.1,148.7 69.8,156.4" fill="url(#t24a2)" /><polygon points="77.0,31.7 81.6,32.2 81.6,36.0 77.0,35.7" fill="#7ac143" /><polygon points="82.4,32.6 92.3,33.8 92.3,36.0 82.4,35.1" fill="#5a5a5a" opacity=".7"/><polygon points="70.1,37.8 109.1,42.4 109.1,69.9 70.1,72.2" fill="#aaa894" /><polygon points="70.1,37.8 109.1,42.4 109.1,51.6 70.1,50.1" fill="#c9cbc0" /><polygon points="70.1,60.8 109.1,60.0 109.1,69.9 70.1,72.2" fill="#8d8b6e" /><polygon points="86.9,53.9 102.2,53.9 102.2,66.9 86.9,68.4" fill="#d8d2b8" opacity=".8"/><polygon points="94.6,39.0 109.1,40.9 109.1,43.9 94.6,42.1" fill="#7ac143" /><polygon points="78.5,76.4 90.8,77.0 90.8,84.0 78.5,84.5" fill="#e6e8e4" /><polygon points="80.5,78.8 88.5,79.1 88.5,81.0 80.5,80.8" fill="#8cc653" /><polygon points="77.5,87.1 98.9,87.7 98.9,103.9 77.5,104.8" fill="#93837a" /><polygon points="100.4,87.7 109.1,88.0 109.1,103.4 100.4,103.9" fill="#7a6a64" /><polygon points="77.5,106.3 98.9,107.0 98.9,124.1 77.5,125.0" fill="#2e3033" /><polygon points="100.4,107.0 109.1,107.3 109.1,123.6 100.4,124.1" fill="#4e4038" /><polygon points="77.5,126.5 98.9,127.1 98.9,140.9 77.5,141.8" fill="#7b5c44" /><polygon points="100.4,127.1 109.1,127.5 109.1,140.5 100.4,140.9" fill="#4a3c34" /><polygon points="80.8,89.8 94.6,90.4 94.6,97.5 80.8,97.2" fill="#d8d0c8" opacity=".55"/><polygon points="78.5,111.2 98.4,110.5 98.4,112.8 78.5,114.0" fill="#d8d8d8" opacity=".6"/><polygon points="80.8,128.8 94.6,128.5 94.6,134.2 80.8,134.9" fill="#e0c8a8" opacity=".6"/><polygon points="93.8,144.6 96.9,144.3 96.9,147.3 93.8,147.8" fill="#7ac143" /><polygon points="69.8,26.4 109.1,31.7 109.1,148.7 69.8,156.4" fill="url(#t24v)" /><polygon points="109.1,24.1 148.9,32.5 148.9,151.0 109.1,155.6" fill="url(#t24a)" /><polygon points="109.9,24.4 148.4,32.3 148.4,33.1 109.9,25.3" fill="#8cc653" opacity=".7"/><polygon points="116.0,29.4 126.7,31.4 126.7,37.8 116.0,36.3" fill="#e2e6dc" /><polygon points="116.0,45.5 143.8,49.3 143.8,66.9 116.0,65.7" fill="#7d6e58" /><polygon points="116.0,45.5 143.8,49.3 143.8,55.4 116.0,53.1" fill="#c8c2b0" /><polygon points="124.4,52.4 133.6,53.4 133.6,62.3 124.4,62.0" fill="#6d8fb0" opacity=".8"/><polygon points="116.0,68.7 143.8,69.6 143.8,88.0 116.0,88.3" fill="#5d5d52" /><polygon points="116.0,68.7 143.8,69.6 143.8,74.5 116.0,74.2" fill="#3c4034" /><polygon points="125.2,73.8 140.5,74.2 140.5,85.2 125.2,85.5" fill="#e6e4dc" opacity=".8"/><polygon points="116.0,95.9 126.7,95.6 126.7,104.4 116.0,105.1" fill="#c4c4c0" /><polygon points="130.1,94.1 143.5,93.7 143.5,94.7 130.1,95.2" fill="#8a8a8a" opacity=".6"/><polygon points="130.1,98.2 143.5,97.8 143.5,98.9 130.1,99.3" fill="#8a8a8a" opacity=".6"/><polygon points="130.1,100.8 143.5,100.4 143.5,101.5 130.1,101.9" fill="#8a8a8a" opacity=".6"/><polygon points="116.0,108.2 125.2,107.7 125.2,108.8 116.0,109.3" fill="#8a8a8a" opacity=".6"/><polygon points="116.0,112.5 125.2,112.0 125.2,113.1 116.0,113.5" fill="#8a8a8a" opacity=".6"/><polygon points="116.0,115.8 125.2,115.4 125.2,116.4 116.0,116.9" fill="#8a8a8a" opacity=".6"/><polygon points="109.1,121.2 148.9,118.9 148.9,130.4 109.1,134.9" fill="#e6e6e6" /><polygon points="109.1,134.9 148.9,130.4 148.9,151.0 109.1,155.6" fill="#3b3b3b" /><polygon points="116.8,141.8 119.8,141.5 119.8,145.2 116.8,145.7" fill="#7ac143" /><polygon points="139.7,138.8 142.3,138.5 142.3,141.8 139.7,142.1" fill="#7ac143" /><polygon points="148.9,24.8 219.2,38.6 214.7,141.8 148.9,155.6" fill="#ffffff" /><polygon points="155.8,31.4 159.6,32.0 159.6,36.3 155.8,35.8" fill="#7ac143" /><polygon points="160.7,32.5 169.5,34.2 169.5,36.3 160.7,35.1" fill="#5a5a5a" opacity=".7"/><polygon points="181.8,35.5 191.7,37.5 191.7,39.0 181.8,37.2" fill="#8cc653" /><polygon points="204.7,35.1 214.7,37.1 214.7,38.3 204.7,36.4" fill="#f08030" /><polygon points="173.4,39.0 218.8,45.8 218.8,47.9 173.4,41.2" fill="#7ac143" /><polygon points="148.9,37.8 218.8,47.3 218.5,74.8 148.9,71.8" fill="#bdb6ac" /><polygon points="148.9,37.8 218.8,47.3 218.8,53.9 186.4,51.6 148.9,45.5" fill="#e2dfda" /><polygon points="148.9,45.5 186.4,51.6 186.4,66.9 148.9,65.4" fill="#dedbd6" /><polygon points="186.4,51.6 218.8,53.9 218.5,68.4 186.4,66.9" fill="#b9ad9f" /><polygon points="148.9,65.4 186.4,66.9 218.5,68.4 218.5,74.8 148.9,71.8" fill="#a89e94" /><polygon points="186.1,50.8 191.0,51.3 191.0,61.5 186.1,61.1" fill="#222" /><polygon points="205.5,49.8 210.1,50.2 210.1,58.5 205.5,58.0" fill="#3a3a34" /><polygon points="186.4,64.6 207.8,63.1 208.5,69.9 187.9,71.5" fill="#ece9e6" /><polygon points="150.4,59.2 164.2,58.9 164.2,66.1 150.4,67.7" fill="#a89078" /><polygon points="163.1,50.4 186.4,52.4 186.4,55.9 163.1,53.9" fill="#fff" opacity=".85"/><polygon points="148.9,71.8 218.5,74.8 218.5,76.1 148.9,73.3" fill="#7ac143" /><polygon points="148.9,73.3 218.5,76.1 214.7,92.9 148.9,96.7" fill="#585858" /><ellipse cx="163.1" cy="84.5" rx="7.4" ry="8.4" fill="#eceae6"/><path d="M156.3 87.9 a7.4 8.4 0 0 0 13.6 0 z" fill="#c79a62"/><polygon points="177.2,79.9 204.7,81.0 204.7,82.5 177.2,81.6" fill="#8cc653" /><polygon points="177.2,86.0 213.1,85.5 213.1,86.8 177.2,87.4" fill="#bdbdbd" opacity=".7"/><polygon points="177.2,89.5 213.1,88.3 213.1,89.5 177.2,90.9" fill="#bdbdbd" opacity=".6"/><polygon points="184.8,99.3 191.7,98.7 191.7,101.8 184.8,102.5" fill="#444" /><polygon points="150.4,104.4 214.7,100.5 214.7,101.1 150.4,105.1" fill="#cfe6b8" /><polygon points="158.8,108.5 164.6,108.2 164.6,110.3 158.8,110.6" fill="#e4e4e4" /><polygon points="168.0,107.9 173.8,107.6 173.8,109.8 168.0,110.1" fill="#e4e4e4" /><polygon points="176.4,107.4 182.2,107.1 182.2,109.3 176.4,109.6" fill="#e4e4e4" /><polygon points="184.8,106.9 190.6,106.6 190.6,108.8 184.8,109.1" fill="#e4e4e4" /><polygon points="192.5,106.5 198.3,106.2 198.3,108.3 192.5,108.6" fill="#e4e4e4" /><polygon points="198.6,106.1 204.4,105.8 204.4,107.9 198.6,108.2" fill="#e4e4e4" /><polygon points="206.2,105.6 212.1,105.3 212.1,107.5 206.2,107.8" fill="#e4e4e4" /><polygon points="155.8,114.3 177.9,112.8 177.9,129.9 155.8,131.9" fill="#8b7f76" /><polygon points="157.3,116.1 173.4,114.9 173.4,123.0 157.3,125.0" fill="#e6ded4" opacity=".35"/><polygon points="179.0,112.5 198.6,110.9 198.6,127.8 179.0,129.6" fill="#94887c" /><polygon points="180.5,114.3 194.0,113.1 194.0,120.9 180.5,122.7" fill="#e6ded4" opacity=".35"/><polygon points="199.4,110.9 214.7,109.7 214.7,126.2 199.4,127.6" fill="#7d7468" /><polygon points="200.9,112.8 210.1,111.9 210.1,119.3 200.9,120.7" fill="#e6ded4" opacity=".35"/><polygon points="155.8,133.4 177.9,131.4 177.9,148.7 155.8,152.1" fill="#44474a" /><polygon points="157.3,135.3 173.4,133.6 173.4,141.8 157.3,145.2" fill="#e6ded4" opacity=".35"/><polygon points="179.0,131.1 198.6,129.3 198.6,145.7 179.0,148.4" fill="#80705c" /><polygon points="180.5,133.0 194.0,131.4 194.0,138.8 180.5,141.5" fill="#e6ded4" opacity=".35"/><polygon points="199.4,129.1 214.7,127.8 214.7,142.6 199.4,145.3" fill="#6c7074" /><polygon points="200.9,131.0 210.1,129.9 210.1,135.7 200.9,138.5" fill="#e6ded4" opacity=".35"/><polygon points="148.9,24.8 219.2,38.6 214.7,141.8 148.9,155.6" fill="url(#t24v)" /></g><polygon points="213.1,79.9 308.7,78.8 308.7,148.7 213.1,150.2" fill="#888" opacity=".35" filter="url(#t24g)"/><g filter="url(#t24f)"><polygon points="214.7,78.8 307.5,77.9 307.5,146.7 214.7,148.3" fill="#ffffff" /><polygon points="214.7,78.5 307.5,77.6 307.5,78.5 214.7,79.4" fill="#9ad060" /><polygon points="222.3,82.2 236.1,82.2 236.1,90.1 222.3,90.1" fill="#e9ebe6" /><polygon points="224.3,84.0 234.1,84.0 234.1,85.9 224.3,85.9" fill="#9ad060" /><circle cx="246.3" cy="85.2" r="3.6" fill="none" stroke="#9ad060" stroke-width=".5"/><circle cx="257.0" cy="85.2" r="3.6" fill="none" stroke="#9ad060" stroke-width=".5"/><circle cx="268.2" cy="85.2" r="3.6" fill="none" stroke="#9ad060" stroke-width=".5"/><circle cx="278.9" cy="85.2" r="3.6" fill="none" stroke="#9ad060" stroke-width=".5"/><circle cx="289.6" cy="85.2" r="3.6" fill="none" stroke="#9ad060" stroke-width=".5"/><polygon points="222.0,92.9 227.7,92.9 227.7,93.8 222.0,93.8" fill="#555" /><polygon points="222.0,95.6 259.8,95.6 259.8,116.6 222.0,116.6" fill="#b3a483" /><polygon points="222.0,95.6 259.8,95.6 259.8,102.1 222.0,102.1" fill="#d8d2bc" /><polygon points="223.8,100.5 238.4,100.5 238.4,112.8 223.8,112.8" fill="#8c9aa4" opacity=".75"/><polygon points="239.9,101.3 252.9,101.3 252.9,111.2 239.9,111.2" fill="#ecebe4" opacity=".8"/><polygon points="254.4,97.5 259.0,97.5 259.0,112.8 254.4,112.8" fill="#c0702c" /><polygon points="222.0,112.0 259.8,112.0 259.8,116.6 222.0,116.6" fill="#6a5f4c" /><polygon points="262.8,95.2 269.0,95.2 269.0,97.0 262.8,97.0" fill="#7ac143" /><polygon points="270.5,95.5 296.5,95.5 296.5,96.7 270.5,96.7" fill="#555" opacity=".8"/><polygon points="262.8,99.8 299.5,99.8 299.5,101.0 262.8,101.0" fill="#8a8a8a" opacity="0.45"/><polygon points="262.8,102.8 282.7,102.8 282.7,104.1 262.8,104.1" fill="#8a8a8a" opacity="0.4"/><polygon points="262.8,107.4 281.2,107.4 281.2,108.6 262.8,108.6" fill="#8a8a8a" opacity="0.6"/><polygon points="262.8,109.4 299.5,109.4 299.5,110.6 262.8,110.6" fill="#8a8a8a" opacity="0.4"/><polygon points="262.8,112.8 281.2,112.8 281.2,114.0 262.8,114.0" fill="#8a8a8a" opacity="0.45"/><polygon points="222.0,119.2 227.7,119.2 227.7,120.3 222.0,120.3" fill="#555" /><polygon points="262.8,119.2 268.2,119.2 268.2,120.3 262.8,120.3" fill="#555" /><polygon points="222.3,121.9 236.1,121.9 236.1,132.3 222.3,132.3" fill="#c9dbe8" /><polygon points="223.8,123.2 228.4,123.2 228.4,132.3 223.8,132.3" fill="#3f6fa8" /><polygon points="230.7,123.8 234.5,123.8 234.5,132.3 230.7,132.3" fill="#e8c8b0" /><polygon points="262.8,122.7 276.6,122.7 276.6,132.7 262.8,132.7" fill="#e8e4e0" /><polygon points="265.9,124.2 273.9,124.2 273.9,129.9 265.9,129.9" fill="#9c8a7c" /><polygon points="238.4,122.6 252.9,122.6 252.9,123.8 238.4,123.8" fill="#444" opacity=".8"/><polygon points="278.1,122.6 291.9,122.6 291.9,123.8 278.1,123.8" fill="#444" opacity=".8"/><polygon points="238.4,126.5 259.5,126.5 259.5,127.5 238.4,127.5" fill="#9a9a9a" opacity=".6"/><polygon points="278.1,126.5 299.5,126.5 299.5,127.5 278.1,127.5" fill="#9a9a9a" opacity=".6"/><polygon points="238.4,129.0 259.5,129.0 259.5,129.9 238.4,129.9" fill="#9a9a9a" opacity=".6"/><polygon points="278.1,129.0 299.5,129.0 299.5,129.9 278.1,129.9" fill="#9a9a9a" opacity=".6"/><polygon points="222.0,134.9 259.8,134.9 259.8,135.7 222.0,135.7" fill="#a4a4a4" opacity=".45"/><polygon points="262.8,134.9 300.3,134.9 300.3,135.7 262.8,135.7" fill="#a4a4a4" opacity=".45"/><polygon points="222.0,138.2 259.8,138.2 259.8,138.9 222.0,138.9" fill="#a4a4a4" opacity=".45"/><polygon points="262.8,138.2 300.3,138.2 300.3,138.9 262.8,138.9" fill="#a4a4a4" opacity=".45"/><polygon points="222.0,141.8 259.8,141.8 259.8,142.6 222.0,142.6" fill="#a4a4a4" opacity=".45"/><polygon points="262.8,141.8 300.3,141.8 300.3,142.6 262.8,142.6" fill="#a4a4a4" opacity=".45"/><polygon points="222.0,145.8 259.8,145.8 259.8,146.6 222.0,146.6" fill="#a4a4a4" opacity=".45"/><polygon points="262.8,145.8 300.3,145.8 300.3,146.6 262.8,146.6" fill="#a4a4a4" opacity=".45"/><polygon points="214.7,78.8 307.5,77.9 307.5,146.7 214.7,148.3" fill="url(#t24v)" /></g></svg></div>
<div class="a lbl" style="left:1143px;top:539px;">UI<span class="k" style="width:30px">设计</span>&nbsp;<span class="k" style="width:135px">交互设计作品集模板</span>&nbsp;-&nbsp;ilovemockup.club<span class="k" style="width:15px">整</span><br><span class="k" style="width:15px">理</span>24.psd</div>
<div class="a cell" style="left:1517px;top:161px;"></div>
<div class="a th" style="left:1525px;top:244px;"><svg width="342" height="192" viewBox="0 0 342 192"><defs><linearGradient id="t25g" x1="0" y1="0" x2="1" y2="0"><stop offset="0" stop-color="#46c4f6"/><stop offset=".55" stop-color="#6f8ef6"/><stop offset="1" stop-color="#9966f5"/></linearGradient></defs><g fill="url(#t25g)" font-family="Liberation Sans, sans-serif" font-weight="bold" font-size="8.7"><text x="16.6" y="22.5" textLength="45.6" lengthAdjust="spacingAndGlyphs">PERSONAL</text><text x="17" y="30.6" textLength="31.2" lengthAdjust="spacingAndGlyphs">WORKS</text></g><rect x="17" y="34.2" width="14.8" height=".6" fill="#c4c4c4"/><text x="17.2" y="40.6" font-family="Liberation Sans, sans-serif" font-size="3.6" fill="#9a9a9a" textLength="26" lengthAdjust="spacingAndGlyphs">ICON DESIGN</text><defs><linearGradient id="t25d" x1="0" y1="0" x2="1" y2="0"><stop offset=".12" stop-color="#45d6f2"/><stop offset=".5" stop-color="#7fa2ee"/><stop offset=".88" stop-color="#c05df0"/></linearGradient><linearGradient id="t25b" x1="0" y1="0" x2="1" y2="0"><stop offset="0" stop-color="#9d6cfb"/><stop offset=".5" stop-color="#8a9afc"/><stop offset="1" stop-color="#62c6fd"/></linearGradient></defs><rect x="147.9" y="51.8" width="46.2" height="46.2" rx="12" fill="url(#t25d)" transform="rotate(45 171 74.9)"/><g fill="none" stroke="#fff" stroke-width=".5" opacity=".8"><path d="M162.4 72.6 V60.4 H170 L171.6 62.4 H181.6 V65"/><path d="M162.4 63.6 H181.6"/><path d="M177.6 66.6 l.9 1.9 2 .3 -1.5 1.4 .4 2 -1.8 -1 -1.8 1 .4 -2 -1.5 -1.4 2 -.3z"/><path d="M174.2 71.2 l3 3.2 3.4 -3.6" opacity=".7"/></g><rect x="164.6" y="78.3" width="11.6" height=".45" fill="#fff" opacity=".55"/><text x="171" y="86.9" text-anchor="middle" font-family="Liberation Sans, sans-serif" font-weight="bold" font-size="7.2" fill="#fff" textLength="17.6" lengthAdjust="spacingAndGlyphs">ICON</text><text x="171" y="91.6" text-anchor="middle" font-family="Liberation Sans, sans-serif" font-weight="bold" font-size="3" fill="#fff" textLength="14.6" lengthAdjust="spacingAndGlyphs">DESIGN</text><path d="M167.2 95.4 H175 L171.1 98.4 Z" fill="#fff"/><path d="M155.4 115.1 l2.4 1.3 l-2.4 1.3 z" fill="#8a8a8a"/><text x="162.8" y="118.5" font-family="Liberation Sans, sans-serif" font-size="5.6" fill="#a4a4a4" textLength="11.5" lengthAdjust="spacingAndGlyphs">图标</text><path d="M155.4 126.9 l2.4 1.3 l-2.4 1.3 z" fill="#8a8a8a"/><text x="162.8" y="130.3" font-family="Liberation Sans, sans-serif" font-size="5.6" fill="#a4a4a4" textLength="12" lengthAdjust="spacingAndGlyphs">线形</text><path d="M155.4 138.7 l2.4 1.3 l-2.4 1.3 z" fill="#8a8a8a"/><text x="162.8" y="142.1" font-family="Liberation Sans, sans-serif" font-size="5.6" fill="#a4a4a4" textLength="12.4" lengthAdjust="spacingAndGlyphs">写实</text><path d="M155.4 150.5 l2.4 1.3 l-2.4 1.3 z" fill="#8a8a8a"/><text x="162.8" y="153.9" font-family="Liberation Sans, sans-serif" font-size="5.6" fill="#a4a4a4" textLength="8" lengthAdjust="spacingAndGlyphs">......</text><rect x="0" y="174.2" width="342" height="17.8" fill="url(#t25b)"/><text x="283" y="185.2" font-family="Liberation Sans, sans-serif" font-size="3.9" fill="#fff" textLength="37.5" lengthAdjust="spacingAndGlyphs">2017-22 PPT Design</text></svg></div>
<div class="a lbl" style="left:1517px;top:539px;">UI<span class="k" style="width:30px">设计</span>&nbsp;<span class="k" style="width:135px">交互设计作品集模板</span>&nbsp;-&nbsp;ilovemockup.club<span class="k" style="width:15px">整</span><br><span class="k" style="width:15px">理</span>25.psd</div>
<div class="a cell" style="left:21px;top:598px;"></div>
<div class="a th" style="left:29px;top:681px;"><svg width="342" height="192" viewBox="0 0 342 192"><defs><linearGradient id="t26bg" x1="0" y1=".2" x2="1" y2=".8"><stop offset="0" stop-color="#ffffff"/><stop offset=".35" stop-color="#fbfaff"/><stop offset="1" stop-color="#e8e4ff"/></linearGradient><linearGradient id="t26sh" x1="0" y1="0" x2="0" y2="1"><stop offset="0" stop-color="#555" stop-opacity=".6"/><stop offset="1" stop-color="#999" stop-opacity="0"/></linearGradient><filter id="t26f"><feGaussianBlur stdDeviation=".3"/></filter><g id="t26_note"><rect x="0" y=".8" width="16" height="15.4" rx=".8" fill="#f9dd4e"/><rect x="0" y="14.6" width="16" height="1.6" rx=".6" fill="#e3c238"/><path d="M3.6 .8 V15 M0 4.6 H16 M0 8.2 H16 M0 11.6 H16" stroke="#e8c53a" stroke-width=".35"/></g><g id="t26_cam"><rect x="0" y="4.6" width="16.4" height="10.4" rx="1" fill="#2a2a2c"/><rect x="6.6" y="2" width="6.2" height="3.2" rx=".6" fill="#2a2a2c"/><circle cx="10.2" cy="9.4" r="3.9" fill="#1a1a1c" stroke="#5c5c60" stroke-width=".6"/><circle cx="10.2" cy="9.4" r="2" fill="#2e2e34"/><circle cx="13.8" cy="6.2" r=".55" fill="#e02a2a"/></g><g id="t26_mail"><rect x=".8" y=".6" width="14.6" height="15.4" rx=".8" fill="#e6e8ec"/><path d="M.8 16 L15.4 .6 V16 Z" fill="#d4d8de"/><path d="M1.6 .7 h2 M4.6 .7 h2 M7.6 .7 h2 M10.6 .7 h2 M13.4 .7 h1.6" stroke="#e0584a" stroke-width=".7"/><path d="M3.2 .7 h1.2 M6.2 .7 h1.2 M9.2 .7 h1.2 M12.2 .7 h1.2" stroke="#4a8ae0" stroke-width=".7"/><path d="M6.4 7.6 l3.8 1.6 l-1.2 -3 l2.4 4.6" stroke="#d84a42" stroke-width=".8" fill="none"/></g><g id="t26_bag"><path d="M.9 3.6 h14.6 l.5 12.4 h-15.6 z" fill="#f8f8f8" stroke="#e2e2e2" stroke-width=".35"/><path d="M5.6 3.6 v-2.4 h5.2 v2.4" fill="none" stroke="#dcdcdc" stroke-width=".8"/><path d="M4.4 6.4 v5.2 M6 6.4 v5.2 M10.4 6.4 v5.2 M12 6.4 v5.2" stroke="#e4e4e4" stroke-width=".6"/></g><g id="t26_photo"><rect x="0" y="2.2" width="16.4" height="13" rx=".5" fill="#fbfbfb" stroke="#d8d8d8" stroke-width=".35"/><rect x="1.4" y="3.4" width="13.6" height="8.8" fill="#2ea6e8"/><path d="M1.4 12.2 V9.4 L5 7.4 L8 9.6 L11 7 L15 10.4 V12.2 Z" fill="#f4f8fb"/><circle cx="12.6" cy="5.2" r="1" fill="#f8e27a"/></g><g id="t26_gear"><circle cx="8.2" cy="9.4" r="7" fill="#c9ccd2"/><circle cx="8.2" cy="8" r="6" fill="#fff" stroke="#e5501c" stroke-width="1.5"/><circle cx="8.2" cy="8" r="2.5" fill="#e5501c"/><circle cx="8.2" cy="8" r=".9" fill="#f7b08c"/><path d="M4 14.4 h8.4 l-1.4 1.8 h-5.6 z" fill="#b8bcc2"/></g><g id="t26_cal"><rect x="0" y=".4" width="16" height="16" rx=".8" fill="#f6f7f8" stroke="#e0e2e6" stroke-width=".3"/><path d="M0 1.2 a.8 .8 0 0 1 .8 -.8 h14.4 a.8 .8 0 0 1 .8 .8 V5.6 H0 Z" fill="#35a3ea"/><path d="M5 4.4 q3 -3 6 0" stroke="#d6ecfa" stroke-width=".7" fill="none"/><text x="8" y="13.6" text-anchor="middle" font-family="Liberation Sans, sans-serif" font-size="6.6" fill="#8c9096">11</text></g><g id="t26_folder"><path d="M0 3 a.8 .8 0 0 1 .8 -.8 h5 l1.4 1.6 h8.6 a.8 .8 0 0 1 .8 .8 V16 H0 Z" fill="#f0a436"/><rect x="1.6" y="3.8" width="13.2" height="4" fill="#fdfdfd"/><path d="M0 6.4 H16.6 V15.6 a.8 .8 0 0 1 -.8 .8 H.8 a.8 .8 0 0 1 -.8 -.8 Z" fill="#f7b646"/></g><g id="t26_clock"><circle cx="8.2" cy="8.4" r="7.4" fill="#fff" stroke="#1c1c1c" stroke-width=".9"/><path d="M5.4 8 L7.8 9.4 L11.8 5.6" fill="none" stroke="#222" stroke-width=".7"/></g><g id="t26_phone"><circle cx="8.2" cy="8.4" r="8.2" fill="#74c42c"/><circle cx="8.2" cy="5.4" r="6" fill="#8cd23c" opacity=".5"/><path d="M4.8 4.6 q-.8 3.6 2 6 q2.6 2.4 4.6 1.2 l-.2 -1.8 l-2 -.6 l-.8 .8 q-1.8 -1 -2.2 -3 l1 -.6 l-.4 -2 z" fill="#fff"/><path d="M9.4 4.4 q2.6 .4 2.8 3" stroke="#fff" stroke-width=".6" fill="none"/></g><g id="t26_ring"><circle cx="8.2" cy="8.6" r="6.1" fill="none" stroke="#2bb4e6" stroke-width="4.4"/><path d="M2.6 11.6 a6.1 6.1 0 0 0 11.2 0" fill="none" stroke="#1e9ed0" stroke-width="4.4" opacity=".35"/></g><g id="t26_chat"><path d="M.2 1.6 a.8 .8 0 0 1 .8 -.8 h14.4 a.8 .8 0 0 1 .8 .8 V13.2 a.8 .8 0 0 1 -.8 .8 H13 v2.4 L10 14 H1 a.8 .8 0 0 1 -.8 -.8 Z" fill="#4fd166"/><circle cx="3.8" cy="7" r="1.2" fill="#fff"/><circle cx="8.2" cy="7" r="1.2" fill="#fff"/><circle cx="12.6" cy="7" r="1.2" fill="#fff"/></g><g id="t26_calc"><rect x="0" y="0" width="16.2" height="16.6" rx="1" fill="#3b444e"/><rect x="1.6" y="1.4" width="12.8" height="3.4" fill="#87919a"/><rect x="2" y="8" width="3.6" height="2.8" fill="#aeb4ba"/><rect x="6.4" y="8" width="3.6" height="2.8" fill="#aeb4ba"/><rect x="2" y="11.8" width="3.6" height="2.8" fill="#aeb4ba"/><rect x="6.4" y="11.8" width="3.6" height="2.8" fill="#aeb4ba"/><rect x="11" y="8" width="3.4" height="6.6" fill="#f2c230"/></g><g id="t26_vinyl"><circle cx="8.2" cy="8.4" r="8.3" fill="#242424"/><circle cx="8.2" cy="8.4" r="6" fill="none" stroke="#3a3a3a" stroke-width=".5"/><circle cx="8.2" cy="8.4" r="3.4" fill="#f03a1a"/><circle cx="8.2" cy="8.4" r=".7" fill="#ffd8c8"/></g><g id="t26_film"><rect x=".8" y="0" width="14.8" height="16.6" rx=".6" fill="#171717"/><circle cx="8" cy="5" r="2.2" fill="#050505"/><path d="M2.6 1.6 v13.6 M13.8 1.6 v13.6" stroke="#f0c030" stroke-width="1.5" stroke-dasharray="1 1.6"/><path d="M5 11 h6.4 M5 13.6 h6.4" stroke="#2a2a2a" stroke-width=".8"/></g><g id="t26_map"><path d="M.4 2.4 L4 1 L8 2.6 L12 1 L15.8 2.4 V15.6 L12 14.4 L8 16 L4 14.4 L.4 15.8 Z" fill="#26b269"/><path d="M8 2.6 L12 1 L15.8 2.4 V9 L10 12 Z" fill="#3aa2e8" opacity=".85"/><path d="M.4 14 L12.6 4 L15.8 7" stroke="#f6d23a" stroke-width="1.5" fill="none"/><path d="M11.4 3.6 a1.9 1.9 0 0 1 1.9 1.9 q0 1.4 -1.9 3.6 q-1.9 -2.2 -1.9 -3.6 a1.9 1.9 0 0 1 1.9 -1.9 z" fill="#e84a3a"/><circle cx="11.4" cy="5.5" r=".7" fill="#fff"/></g></defs><rect width="342" height="192" fill="url(#t26bg)"/><defs><linearGradient id="t26g" x1="0" y1="0" x2="1" y2="0"><stop offset="0" stop-color="#46c4f6"/><stop offset=".55" stop-color="#6f8ef6"/><stop offset="1" stop-color="#9966f5"/></linearGradient></defs><g fill="url(#t26g)" font-family="Liberation Sans, sans-serif" font-weight="bold" font-size="8.7"><text x="16.6" y="22.5" textLength="45.6" lengthAdjust="spacingAndGlyphs">PERSONAL</text><text x="17" y="30.6" textLength="31.2" lengthAdjust="spacingAndGlyphs">WORKS</text></g><rect x="17" y="34.2" width="14.8" height=".6" fill="#c4c4c4"/><text x="17.2" y="40.6" font-family="Liberation Sans, sans-serif" font-size="3.6" fill="#9a9a9a" textLength="26" lengthAdjust="spacingAndGlyphs">ICON DESIGN</text><text x="283" y="178" font-family="Liberation Sans, sans-serif" font-size="3.9" fill="#5a5a5a" textLength="37.5" lengthAdjust="spacingAndGlyphs">2017-22 PPT Design</text><rect x="50.4" y="172" width="59.4" height="14" fill="url(#t26sh)" filter="url(#t26f)"/><rect x="49.4" y="46.3" width="61.3" height="127" rx="8.6" fill="#0d0d0f"/><rect x="48.8" y="62" width=".8" height="4" fill="#222"/><rect x="48.8" y="70" width=".8" height="7" fill="#222"/><rect x="110.6" y="73" width=".8" height="8" fill="#222"/><rect x="52.9" y="60.9" width="54.3" height="97.1" fill="#ffffff"/><rect x="75.4" y="53.2" width="9.6" height=".9" rx=".45" fill="#4a4a4e"/><circle cx="70.4" cy="53.7" r=".6" fill="#3c3c44"/><circle cx="79.8" cy="165.5" r="4.3" fill="none" stroke="#3e3e44" stroke-width=".6"/><g filter="url(#t26f)"><use href="#t26_note" transform="translate(57.9 71.4) scale(.585)"/><rect x="61.0" y="82.5" width="3.4" height=".9" fill="#8a8a8a" opacity=".6"/><use href="#t26_cam" transform="translate(75.4 71.4) scale(.585)"/><rect x="78.5" y="82.5" width="3.4" height=".9" fill="#8a8a8a" opacity=".6"/><use href="#t26_mail" transform="translate(92.7 71.4) scale(.585)"/><rect x="95.8" y="82.5" width="3.4" height=".9" fill="#8a8a8a" opacity=".6"/><use href="#t26_cal" transform="translate(57.9 86.0) scale(.585)"/><rect x="61.0" y="97.1" width="3.4" height=".9" fill="#8a8a8a" opacity=".6"/><use href="#t26_folder" transform="translate(75.4 86.0) scale(.585)"/><rect x="78.5" y="97.1" width="3.4" height=".9" fill="#8a8a8a" opacity=".6"/><use href="#t26_clock" transform="translate(92.7 86.0) scale(.585)"/><rect x="95.8" y="97.1" width="3.4" height=".9" fill="#8a8a8a" opacity=".6"/><use href="#t26_calc" transform="translate(57.9 99.8) scale(.585)"/><rect x="61.0" y="110.9" width="3.4" height=".9" fill="#8a8a8a" opacity=".6"/><use href="#t26_vinyl" transform="translate(75.4 99.8) scale(.585)"/><rect x="78.5" y="110.9" width="3.4" height=".9" fill="#8a8a8a" opacity=".6"/><use href="#t26_film" transform="translate(92.7 99.8) scale(.585)"/><rect x="95.8" y="110.9" width="3.4" height=".9" fill="#8a8a8a" opacity=".6"/><use href="#t26_bag" transform="translate(57.9 114.2) scale(.585)"/><rect x="61.0" y="125.3" width="3.4" height=".9" fill="#8a8a8a" opacity=".6"/><use href="#t26_photo" transform="translate(75.4 114.2) scale(.585)"/><rect x="78.5" y="125.3" width="3.4" height=".9" fill="#8a8a8a" opacity=".6"/><use href="#t26_gear" transform="translate(92.7 114.2) scale(.585)"/><rect x="95.8" y="125.3" width="3.4" height=".9" fill="#8a8a8a" opacity=".6"/><use href="#t26_phone" transform="translate(57.9 128.0) scale(.585)"/><rect x="61.0" y="139.1" width="3.4" height=".9" fill="#8a8a8a" opacity=".6"/><use href="#t26_ring" transform="translate(75.4 128.0) scale(.585)"/><rect x="78.5" y="139.1" width="3.4" height=".9" fill="#8a8a8a" opacity=".6"/><use href="#t26_chat" transform="translate(92.7 128.0) scale(.585)"/><rect x="95.8" y="139.1" width="3.4" height=".9" fill="#8a8a8a" opacity=".6"/><use href="#t26_map" transform="translate(57.9 142.6) scale(.585)"/><rect x="61.0" y="153.7" width="3.4" height=".9" fill="#8a8a8a" opacity=".6"/><use href="#t26_note" transform="translate(134.0 63.4)"/><rect x="139.5" y="83.3" width="5.4" height="1.7" fill="#55555c" opacity=".55"/><use href="#t26_cam" transform="translate(165.2 63.4)"/><rect x="170.7" y="83.3" width="5.4" height="1.7" fill="#55555c" opacity=".55"/><use href="#t26_mail" transform="translate(196.7 63.4)"/><rect x="202.2" y="83.3" width="5.4" height="1.7" fill="#55555c" opacity=".55"/><use href="#t26_bag" transform="translate(227.3 63.4)"/><rect x="232.8" y="83.3" width="5.4" height="1.7" fill="#55555c" opacity=".55"/><use href="#t26_photo" transform="translate(258.4 63.4)"/><rect x="263.9" y="83.3" width="5.4" height="1.7" fill="#55555c" opacity=".55"/><use href="#t26_gear" transform="translate(289.9 63.4)"/><rect x="295.4" y="83.3" width="5.4" height="1.7" fill="#55555c" opacity=".55"/><use href="#t26_cal" transform="translate(134.0 89.0)"/><rect x="139.5" y="108.9" width="5.4" height="1.7" fill="#55555c" opacity=".55"/><use href="#t26_folder" transform="translate(165.2 89.0)"/><rect x="170.7" y="108.9" width="5.4" height="1.7" fill="#55555c" opacity=".55"/><use href="#t26_clock" transform="translate(196.7 89.0)"/><rect x="202.2" y="108.9" width="5.4" height="1.7" fill="#55555c" opacity=".55"/><use href="#t26_phone" transform="translate(227.3 89.0)"/><rect x="232.8" y="108.9" width="5.4" height="1.7" fill="#55555c" opacity=".55"/><use href="#t26_ring" transform="translate(258.4 89.0)"/><rect x="263.9" y="108.9" width="5.4" height="1.7" fill="#55555c" opacity=".55"/><use href="#t26_chat" transform="translate(289.9 89.0)"/><rect x="295.4" y="108.9" width="5.4" height="1.7" fill="#55555c" opacity=".55"/><use href="#t26_calc" transform="translate(134.0 115.0)"/><rect x="139.5" y="134.9" width="5.4" height="1.7" fill="#55555c" opacity=".55"/><use href="#t26_vinyl" transform="translate(165.2 115.0)"/><rect x="170.7" y="134.9" width="5.4" height="1.7" fill="#55555c" opacity=".55"/><use href="#t26_film" transform="translate(196.7 115.0)"/><rect x="202.2" y="134.9" width="5.4" height="1.7" fill="#55555c" opacity=".55"/><use href="#t26_map" transform="translate(227.3 115.0)"/><rect x="232.8" y="134.9" width="5.4" height="1.7" fill="#55555c" opacity=".55"/></g></svg></div>
<div class="a lbl" style="left:21px;top:976px;">UI<span class="k" style="width:30px">设计</span>&nbsp;<span class="k" style="width:135px">交互设计作品集模板</span>&nbsp;-&nbsp;ilovemockup.club<span class="k" style="width:15px">整</span><br><span class="k" style="width:15px">理</span>26.psd</div>
<div class="a cell" style="left:395px;top:598px;"></div>
<div class="a th" style="left:403px;top:681px;"><svg width="342" height="192" viewBox="0 0 342 192"><defs><linearGradient id="t27g" x1="0" y1="0" x2="1" y2="0"><stop offset="0" stop-color="#46c4f6"/><stop offset=".55" stop-color="#6f8ef6"/><stop offset="1" stop-color="#9966f5"/></linearGradient></defs><g fill="url(#t27g)" font-family="Liberation Sans, sans-serif" font-weight="bold" font-size="8.7"><text x="16.6" y="22.5" textLength="45.6" lengthAdjust="spacingAndGlyphs">PERSONAL</text><text x="17" y="30.6" textLength="31.2" lengthAdjust="spacingAndGlyphs">WORKS</text></g><rect x="17" y="34.2" width="14.8" height=".6" fill="#c4c4c4"/><text x="17.2" y="40.6" font-family="Liberation Sans, sans-serif" font-size="3.6" fill="#9a9a9a" textLength="26" lengthAdjust="spacingAndGlyphs">ICON DESIGN</text><text x="283" y="178" font-family="Liberation Sans, sans-serif" font-size="3.9" fill="#5a5a5a" textLength="37.5" lengthAdjust="spacingAndGlyphs">2017-22 PPT Design</text><g fill="none" stroke="#23b2ef" stroke-width=".85" stroke-linecap="round" stroke-linejoin="round" opacity=".95"><path transform="translate(62.3 62.5)" d="M.8 6.4 L6 1 L11.2 6.4 M2 5.4 V11.4 H5 M7.4 11.4 H10.2 V5.4 M5 8.2 h2.2 M8.6 1.8 l2.4 2.4"/><path transform="translate(85.7 62.5)" d="M.6 5.8 A5.5 5.2 0 0 1 11.4 5.8 M.6 5.8 h10.8 M6 1 V10 a1.4 1.4 0 0 0 2.6 .4"/><path transform="translate(109.2 62.5)" d="M.8 .8 V11.2 H11.4 M3 9.2 V5.6 h2 V9.2 M3 7.4 h2 M7 6.4 h3 M7 8.6 h3 M6.4 1.4 h2 M8.8 2.8 h2"/><path transform="translate(132.5 62.5)" d="M0.8 6.2 a5.2 5.2 0 1 0 10.4 0 a5.2 5.2 0 1 0 -10.4 0 M3.4 3.8 L8.6 8.6 M4.4 8.4 L7.6 4 M6 .4 v1.2 M.8 6.2 h1"/><path transform="translate(156.1 62.5)" d="M0.6 6 a5.4 5.4 0 1 0 10.8 0 a5.4 5.4 0 1 0 -10.8 0 M2.4 2.6 q3 1.4 1 4 q-1.4 2 1.4 4.4 M7.4 .8 q-1.4 2.4 1.6 3.4 q2 .6 2.2 2.6 M9.6 9.8 q-1.2 -2 -3 -1.2"/><path transform="translate(179.6 62.5)" d="M.8 1 H9 M.8 1 V11.2 H11.2 V3.4 M1.6 10.6 L10.8 1.2 M10.8 1.2 h-2.6 M10.8 1.2 v2.6 M1 11 l1 -1"/><path transform="translate(203.0 62.5)" d="M6.2 3.2 a2.6 2.6 0 1 0 5.2 0 a2.6 2.6 0 1 0 -5.2 0 M7 5 L1 11 M2.4 9.6 l1.4 1.4 M4 8 l1.2 1.2"/><path transform="translate(226.7 62.5)" d="M0.6 6 a5.4 5.4 0 1 0 10.8 0 a5.4 5.4 0 1 0 -10.8 0 M4.4 4.8 h3.6 v3 h-3.6 z M6 3 v1.8"/><path transform="translate(250.1 62.5)" d="M0.6 6 a5.4 5.4 0 1 0 10.8 0 a5.4 5.4 0 1 0 -10.8 0 M3.4 3.8 h5.2 v3.6 h-5.2 z M6 7.4 v1.6 M4.4 9 h3.2"/><path transform="translate(273.6 62.5)" d="M5 11.2 h3.6 M3.6 11.2 h6.4 M5.4 11 V5.2 h2.6 V11 M6.6 1 q1.4 1.6 0 3 q-1.4 -1.4 0 -3"/><path transform="translate(62.3 85.8)" d="M.6 4.4 L3 1.4 H9 L11.4 4.4 L6 11.2 Z M.6 4.4 H11.4 M3 1.4 L4.2 4.4 L6 11 L7.8 4.4 L9 1.4"/><path transform="translate(85.7 85.8)" d="M.6 4 H11.4 V6 H.6 Z M1.6 6 V11.4 M10.4 6 V11.4 M4.8 4 V11.4 M7.2 4 V11.4 M6 4 Q3 .4 2.4 2.4 Q2.4 4 6 4 Q9.6 4 9.6 2.4 Q9 .4 6 4"/><path transform="translate(109.2 85.8)" d="M10.4 5 A4.6 4.6 0 0 0 2.4 3.2 M1.6 7 A4.6 4.6 0 0 0 9.6 8.8 M6 .2 L7.6 1.8 L5.8 3 M6 11.8 L4.4 10.2 L6.2 9"/><path transform="translate(132.5 85.8)" d="M0.6 6 a5.4 5.4 0 1 0 10.8 0 a5.4 5.4 0 1 0 -10.8 0 M4.6 9 V3.6 h2 a1.6 1.6 0 0 1 0 3.2 h-2 M2.6 9.6 L9.4 2.8"/><path transform="translate(156.1 85.8)" d="M.8 11 V8.6 Q.8 5.8 3.6 5.6 Q4.6 3 7 3.4 Q9.6 3.8 9.6 6 Q11.4 6.4 11.4 8 H7.6 M6 .4 V7 M4.4 5.4 L6 7.2 L7.6 5.4 M.8 8.6 h3.4"/><path transform="translate(179.6 85.8)" d="M.8 11 V8 Q.8 6 3 5.6 M9 5.6 Q11.4 6 11.4 8 V11 M6 7.6 V.8 M4.2 2.6 L6 .6 L7.8 2.6 M.8 8.4 h3 l1 1.6 h2.4 l1 -1.6 h3"/><path transform="translate(203.0 85.8)" d="M1 11 V7.8 h2.4 V4.4 Q3.4 1.2 6.6 1.4 H9.6 V4.8 H11.2 V8 H8.4 V11 M1 7.8 h1"/><path transform="translate(226.7 85.8)" d="M.8 11 V8.4 Q.8 5.4 4 5.2 Q6 3.6 8 5.2 Q11.4 5.4 11.4 8.4 V11 M.8 8.6 h3 l.8 1.4 h2.8 l.8 -1.4 h3"/><path transform="translate(250.1 85.8)" d="M1.2 .8 H10.8 Q10.8 5.4 6 6.4 Q1.2 5.4 1.2 .8 M6 6.4 V10.8 M3.6 10.8 h4.8 M1.2 2 Q0 4 3 5 M10.8 2 Q12 4 9 5"/><path transform="translate(273.6 85.8)" d="M1 11.2 H10.8 V1.6 Z M.6 10.4 L11.4 .6 M8.2 8.6 V11 M6 9.4 V11 M3.8 10 V11"/><path transform="translate(62.3 109.2)" d="M.8 7 L6.4 1.4 H10.4 V5.4 L4.8 11 Z M8.6 3.2 v.1 M10.4 1.4 l1 -1"/><path transform="translate(85.7 109.2)" d="M.8 1.6 a.8 .8 0 0 1 .8 -.8 H10.4 a.8 .8 0 0 1 .8 .8 V8.4 a.8 .8 0 0 1 -.8 .8 H4.2 L2.6 11 V9.2 H1.6 a.8 .8 0 0 1 -.8 -.8 Z M3.2 5 h1.8 M6.4 5 h2.4"/><path transform="translate(109.2 109.2)" d="M4.2 3.4 V1 H11.2 M.8 3.4 H6.6 V8.4 H4 L2.4 10.2 V8.4 H.8 Z M6.6 6.6 l1.6 1.4 l2.4 -2.4"/><path transform="translate(132.5 109.2)" d="M.8 1 H8 L11 4 V11.2 H.8 Z M8 1 V4 H11 M2.6 4.4 h3 M2.6 6.6 h5.6 M2.6 8.8 h5.6"/><path transform="translate(156.1 109.2)" d="M.8 1 H6.4 Q11 1.4 11 6.2 Q11 10.6 8 11.2 H.8 Z M2.6 4 h4 M2.6 6.2 h3 M2.6 8.4 h3 M6.8 8 l1.2 1.2 l2 -2.4"/><path transform="translate(179.6 109.2)" d="M2.6 .8 H10.8 V11.2 H2.6 M10.8 .8 V11.2 M1.6 11.2 H10.8"/><path transform="translate(203.0 109.2)" d="M1.4 .8 H10.2 a.8 .8 0 0 1 .8 .8 V10.4 a.8 .8 0 0 1 -.8 .8 H1.4 Z M11 3 h.6 M11 6 h.6 M11 9 h.6 M4.9 4.8 a1.3 1.3 0 1 0 2.6 0 a1.3 1.3 0 1 0 -2.6 0 M3.8 9.2 Q3.8 7 6.2 7 Q8.6 7 8.6 9.2 Z"/><path transform="translate(226.7 109.2)" d="M.8 1 H4.6 L5.8 2.4 H11.2 V11 H.8 Z M.8 3.6 H11.2"/><path transform="translate(250.1 109.2)" d="M.8 2.6 V1 H4.2 M.8 2.6 V10.8 H11.2 V4.6 H.8 M2.4 4.6 L6 7.6 L10 3 M8.2 3 h1.8 v1.8"/><path transform="translate(273.6 109.2)" d="M.8 1 H11.2 V11 H.8 Z M.8 8.6 L4 5.4 L6.8 8 L8.4 6.6 L11.2 9.2 M8.6 3.4 v.1"/><path transform="translate(62.3 132.5)" d="M.8 1 H11.2 M.8 1 V10.4 H11.2 V1 M.8 9 L4.2 5.4 L7.2 8.4 L8.8 7 L11.2 9.4 M6.4 3.6 l1.6 -1.2 M1 11.6 v.1 M11 11.6 v.1"/><path transform="translate(85.7 132.5)" d="M.8 1 H11 V9.8 M1.8 2 V11.2 M1.8 11.2 L4.6 8.6 L7.6 10.6 M3 8.6 L6.2 5.6 L8.6 8 L10.8 6.4 M6 4 v.1 M10.8 9.8 v1.4"/><path transform="translate(109.2 132.5)" d="M.8 1 H11.2 M1 1 V11.2 M11 1 V11.2 M4.6 4 V8.2 L8 6.2 Z M1 9.4 h.8 M10.2 9.4 h.8"/><path transform="translate(132.5 132.5)" d="M1 11.2 V4 M1 1.4 q.2 -.8 1.4 -.6 M3.6 1.4 q1 -.8 2 0 M9 5.2 V11 M10.8 5.2 V11 M9 8 h1.8 M6.4 2.6 v.1"/><path transform="translate(156.1 132.5)" d="M.8 3.6 H11.2 V10.8 H.8 Z M4 .6 L6 3.4 L8.4 .8 M8.6 5 h1.6 v4 h-1.6 z M1.6 11.6 h8.8 M2 4.8 V9.6 H7.4"/><path transform="translate(179.6 132.5)" d="M1.7 8.2 a1.9 1.9 0 1 0 3.8 0 a1.9 1.9 0 1 0 -3.8 0 M3.6 6.6 h.1 M1 4.6 V11.2 M6 2.6 L8.2 .6 M7 3.4 L9.2 5.6"/><path transform="translate(203.0 132.5)" d="M3.6 .8 h2.4 V9.4 L4.8 11.4 L3.6 9.4 Z M4.2 1 V9 M5.2 1 V9 M8 .8 V11.2 M8 1 h3 M8 4.2 h2.2 M8 7.4 h3"/><path transform="translate(226.7 132.5)" d="M2.2 7.6 L7.4 2.4 a2 2 0 0 1 2.8 2.8 L5 10.4 a2.8 2.8 0 0 1 -4 -4 L5.8 1.6 M3.4 8.6 L8.6 3.4"/><path transform="translate(250.1 132.5)" d="M.6 4.6 Q6 -.4 11.4 4.6 M2.4 6.6 Q6 3.2 9.6 6.6 M4.2 8.6 Q6 7 7.8 8.6 M6 10.4 v.1"/><path transform="translate(273.6 132.5)" d="M6 4.8 a1.6 1.6 0 1 1 1.6 -1.6 M6 4.8 V6 L11 9 Q11.6 10.6 10.2 10.8 H1.8 Q.4 10.6 1 9 L6 6"/></g></svg></div>
<div class="a lbl" style="left:395px;top:976px;">UI<span class="k" style="width:30px">设计</span>&nbsp;<span class="k" style="width:135px">交互设计作品集模板</span>&nbsp;-&nbsp;ilovemockup.club<span class="k" style="width:15px">整</span><br><span class="k" style="width:15px">理</span>27.psd</div>
<div class="a cell" style="left:769px;top:598px;"></div>
<div class="a th" style="left:777px;top:681px;"><svg width="342" height="192" viewBox="0 0 342 192"><defs><linearGradient id="t28g" x1="0" y1="0" x2="1" y2="0"><stop offset="0" stop-color="#46c4f6"/><stop offset=".55" stop-color="#6f8ef6"/><stop offset="1" stop-color="#9966f5"/></linearGradient></defs><g fill="url(#t28g)" font-family="Liberation Sans, sans-serif" font-weight="bold" font-size="8.7"><text x="16.6" y="22.5" textLength="45.6" lengthAdjust="spacingAndGlyphs">PERSONAL</text><text x="17" y="30.6" textLength="31.2" lengthAdjust="spacingAndGlyphs">WORKS</text></g><rect x="17" y="34.2" width="14.8" height=".6" fill="#c4c4c4"/><text x="17.2" y="40.6" font-family="Liberation Sans, sans-serif" font-size="3.6" fill="#9a9a9a" textLength="30.5" lengthAdjust="spacingAndGlyphs">OTHER DESIGN</text><defs><linearGradient id="t28d" x1="0" y1="0" x2="1" y2="0"><stop offset=".12" stop-color="#45d6f2"/><stop offset=".5" stop-color="#7fa2ee"/><stop offset=".88" stop-color="#c05df0"/></linearGradient><linearGradient id="t28b" x1="0" y1="0" x2="1" y2="0"><stop offset="0" stop-color="#9d6cfb"/><stop offset=".5" stop-color="#8a9afc"/><stop offset="1" stop-color="#62c6fd"/></linearGradient></defs><rect x="147.9" y="51.8" width="46.2" height="46.2" rx="12" fill="url(#t28d)" transform="rotate(45 171 74.9)"/><g fill="none" stroke="#fff" stroke-width=".55" opacity=".8"><rect x="162.6" y="61.4" width="16.6" height="12" rx=".8"/><path d="M167.4 61.4 v-1.6 a1.2 1.2 0 0 1 1.2 -1.2 h4.6 a1.2 1.2 0 0 1 1.2 1.2 v1.6"/><path d="M162.6 64.6 q8.3 6 16.6 0"/></g><rect x="164.6" y="78.3" width="11.6" height=".45" fill="#fff" opacity=".55"/><text x="171" y="86.9" text-anchor="middle" font-family="Liberation Sans, sans-serif" font-weight="bold" font-size="7.2" fill="#fff" textLength="23.6" lengthAdjust="spacingAndGlyphs">OTHER</text><text x="171" y="91.6" text-anchor="middle" font-family="Liberation Sans, sans-serif" font-weight="bold" font-size="3" fill="#fff" textLength="14.6" lengthAdjust="spacingAndGlyphs">DESIGN</text><path d="M167.2 95.4 H175 L171.1 98.4 Z" fill="#fff"/><path d="M155.4 115.1 l2.4 1.3 l-2.4 1.3 z" fill="#8a8a8a"/><text x="162.8" y="118.5" font-family="Liberation Sans, sans-serif" font-size="5.6" fill="#a4a4a4" textLength="12.4" lengthAdjust="spacingAndGlyphs">手绘</text><path d="M155.4 126.9 l2.4 1.3 l-2.4 1.3 z" fill="#8a8a8a"/><text x="162.8" y="130.3" font-family="Liberation Sans, sans-serif" font-size="5.6" fill="#a4a4a4" textLength="11" lengthAdjust="spacingAndGlyphs">C4D</text><path d="M155.4 138.7 l2.4 1.3 l-2.4 1.3 z" fill="#8a8a8a"/><text x="162.8" y="142.1" font-family="Liberation Sans, sans-serif" font-size="5.6" fill="#a4a4a4" textLength="12" lengthAdjust="spacingAndGlyphs">名片</text><path d="M155.4 150.5 l2.4 1.3 l-2.4 1.3 z" fill="#8a8a8a"/><text x="162.8" y="153.9" font-family="Liberation Sans, sans-serif" font-size="5.6" fill="#a4a4a4" textLength="8" lengthAdjust="spacingAndGlyphs">......</text><rect x="0" y="174.2" width="342" height="17.8" fill="url(#t28b)"/><text x="283" y="185.2" font-family="Liberation Sans, sans-serif" font-size="3.9" fill="#fff" textLength="37.5" lengthAdjust="spacingAndGlyphs">2017-22 PPT Design</text></svg></div>
<div class="a lbl" style="left:769px;top:976px;">UI<span class="k" style="width:30px">设计</span>&nbsp;<span class="k" style="width:135px">交互设计作品集模板</span>&nbsp;-&nbsp;ilovemockup.club<span class="k" style="width:15px">整</span><br><span class="k" style="width:15px">理</span>28.psd</div>
<div class="a cell" style="left:1143px;top:598px;"></div>
<div class="a th" style="left:1151px;top:681px;"><svg width="342" height="192" viewBox="0 0 342 192"><defs><linearGradient id="t29g" x1="0" y1="0" x2="1" y2="0"><stop offset="0" stop-color="#46c4f6"/><stop offset=".55" stop-color="#6f8ef6"/><stop offset="1" stop-color="#9966f5"/></linearGradient></defs><g fill="url(#t29g)" font-family="Liberation Sans, sans-serif" font-weight="bold" font-size="8.7"><text x="16.6" y="22.5" textLength="45.6" lengthAdjust="spacingAndGlyphs">PERSONAL</text><text x="17" y="30.6" textLength="31.2" lengthAdjust="spacingAndGlyphs">WORKS</text></g><rect x="17" y="34.2" width="14.8" height=".6" fill="#c4c4c4"/><text x="17.2" y="40.6" font-family="Liberation Sans, sans-serif" font-size="3.6" fill="#9a9a9a" textLength="26" lengthAdjust="spacingAndGlyphs">LOGO DESIGN</text><text x="283" y="178" font-family="Liberation Sans, sans-serif" font-size="3.9" fill="#5a5a5a" textLength="37.5" lengthAdjust="spacingAndGlyphs">2017-22 PPT Design</text><defs><radialGradient id="t29a" cx=".12" cy=".1" r="1.1"><stop offset="0" stop-color="#d9d9dd"/><stop offset=".45" stop-color="#a9a9af"/><stop offset="1" stop-color="#55555c"/></radialGradient><linearGradient id="t29b" x1="0" y1="0" x2="1" y2="0"><stop offset="0" stop-color="#7b6f6a"/><stop offset=".14" stop-color="#6a5e58"/><stop offset=".3" stop-color="#a89e98"/><stop offset=".62" stop-color="#b9b0aa"/><stop offset=".82" stop-color="#75625c"/><stop offset="1" stop-color="#5e4a46"/></linearGradient><radialGradient id="t29e" cx=".55" cy=".35" r=".6"><stop offset="0" stop-color="#d4d4d6"/><stop offset=".55" stop-color="#8c8c90"/><stop offset="1" stop-color="#4a4a50"/></radialGradient><filter id="t29f" x="-10%" y="-10%" width="120%" height="120%"><feGaussianBlur stdDeviation="1.1"/></filter><filter id="t29g"><feGaussianBlur stdDeviation=".35"/></filter><clipPath id="t29c0"><rect x="47.87" y="44.25" width="79.99" height="57.61"/></clipPath><clipPath id="t29c1"><rect x="127.86" y="44.25" width="82.34" height="57.61"/></clipPath><clipPath id="t29c2"><rect x="210.21" y="44.25" width="83.86" height="57.61"/></clipPath><clipPath id="t29c3"><rect x="47.87" y="101.86" width="79.99" height="58.03"/></clipPath><clipPath id="t29c4"><rect x="127.86" y="101.86" width="82.34" height="58.03"/></clipPath><clipPath id="t29c5"><rect x="210.21" y="101.86" width="83.86" height="58.03"/></clipPath></defs><g clip-path="url(#t29c0)"><rect x="47.87" y="44.25" width="79.99" height="57.61" fill="url(#t29a)" /><polygon points="47.9,84.6 99.3,101.9 47.9,101.9" fill="#d6d6da" opacity=".5" filter="url(#t29f)"/><polygon points="60.9,60.0 98.6,47.0 99.0,91.2 61.7,82.9" fill="#e4e4ea" opacity=".42"/><polygon points="60.9,60.0 98.6,47.0 99.0,91.2 61.7,82.9" fill="none" stroke="#f4f4f8" stroke-width=".35" opacity=".7"/><g fill="#141414" filter="url(#t29g)"><polygon points="70.3,56.7 72.3,61.1 76.1,62.8 80.2,61.9 83.8,59.2 84.9,55.9 82.7,59.7 79.6,60.8 76.1,61.1 73.0,59.7" fill="#141414" /><polygon points="74.7,62.2 81.0,61.7 79.6,68.7 78.0,72.2 76.3,69.1" fill="#141414" /><polygon points="71.6,70.5 73.7,74.2 77.8,76.0 82.0,73.8 83.8,70.1 81.3,73.3 77.8,74.4 74.4,73.0" fill="#141414" /><polygon points="66.8,79.1 92.4,82.1 92.4,84.0 66.8,81.0" fill="#141414" /><polygon points="69.6,82.7 91.7,85.4 91.7,86.3 69.6,83.5" fill="#141414" opacity=".7"/></g><ellipse cx="61.68" cy="60.83" rx="0.83" ry="0.83" fill="#55555c" /><ellipse cx="96.50" cy="50.05" rx="0.83" ry="0.83" fill="#55555c" /><ellipse cx="62.38" cy="81.55" rx="0.83" ry="0.83" fill="#55555c" /><ellipse cx="96.78" cy="90.40" rx="0.83" ry="0.83" fill="#55555c" /></g><g clip-path="url(#t29c1)"><rect x="127.86" y="44.25" width="82.34" height="57.61" fill="url(#t29b)" /><rect x="127.86" y="84.59" width="82.34" height="17.27" fill="#6a5c56" opacity=".45" filter="url(#t29f)"/><rect x="189.07" y="44.25" width="12.43" height="57.61" fill="#4c3a36" opacity=".5" filter="url(#t29f)"/><rect x="127.86" y="44.25" width="82.34" height="11.33" fill="#5a4e4a" opacity=".45" filter="url(#t29f)"/><text x="145.6" y="78.4" font-family="Liberation Sans, sans-serif" font-size="21" fill="#f4f4f4" textLength="50" lengthAdjust="spacingAndGlyphs" filter="url(#t29g)">TENBO</text><rect x="147.34" y="82.11" width="47.94" height="0.69" fill="#e8e8e8" opacity=".7"/><rect x="157.29" y="78.79" width="19.34" height="2.07" fill="#e0e0e0" opacity=".55"/></g><g clip-path="url(#t29c2)"><rect x="210.21" y="44.25" width="83.86" height="57.61" fill="#e9e9e9" /><polygon points="235.4,47.0 272.2,47.0 272.0,80.4 235.4,80.4" fill="#2b9994" /><polygon points="238.5,52.5 276.4,55.0 270.6,90.4 237.4,84.6" fill="#3fb4aa" /><polygon points="218.8,71.6 251.2,53.4 273.1,84.6 232.2,101.4" fill="#a8eee4" /><ellipse cx="230.52" cy="72.16" rx="4.97" ry="4.70" fill="none" stroke="#d6b24c" stroke-width="1.1"/><ellipse cx="230.52" cy="72.16" rx="2.49" ry="2.21" fill="#d6b24c" opacity=".8"/><polygon points="226.4,79.3 238.8,75.2 239.5,77.7 227.2,81.8" fill="#d6b24c" opacity=".85"/><ellipse cx="245.02" cy="55.30" rx="3.59" ry="3.04" fill="#cfae4a" opacity=".7"/></g><g clip-path="url(#t29c3)"><rect x="47.87" y="101.86" width="79.99" height="58.03" fill="#1d1d1d" /><rect x="47.87" y="101.86" width="79.99" height="14.51" fill="#2c2c2c" opacity=".6" filter="url(#t29f)"/><g fill="#f4f4f4" filter="url(#t29g)"><polygon points="84.1,110.8 89.6,109.5 93.7,114.3 102.0,116.4 108.9,115.3 113.8,112.9 115.2,116.6 110.3,120.5 102.0,121.9 98.6,121.6 96.5,127.4 92.4,128.5 90.3,123.3 91.0,119.1 86.1,116.4" fill="#f6f6f6" /><polygon points="59.2,134.6 68.9,136.0 120.0,149.8 120.3,153.1 68.9,139.3 59.5,137.6" fill="#e0e0e0" opacity=".55"/><polygon points="59.2,135.4 120.0,150.6 120.0,151.3 59.2,136.1" fill="#1d1d1d" opacity=".5"/><polygon points="71.6,144.0 118.6,156.4 118.6,158.1 71.6,145.7" fill="#bdbdbd" opacity=".6"/></g><ellipse cx="93.74" cy="127.42" rx="13.82" ry="11.05" fill="none" stroke="#cfcfcf" stroke-width=".5" stroke-dasharray="1 1.2" opacity=".7"/></g><g clip-path="url(#t29c4)"><rect x="127.86" y="101.86" width="82.34" height="58.03" fill="#3c3c40" /><polygon points="149.0,116.4 205.0,103.9 205.0,149.5 149.0,144.0" fill="url(#t29e)" /><polygon points="127.9,101.9 210.2,101.9 210.2,103.9 205.0,103.9 149.0,116.4 127.9,118.4" fill="#26262a" /><polygon points="127.9,118.4 143.5,117.5 143.5,148.1 127.9,149.5" fill="#d4d4d4" /><polygon points="145.5,118.4 149.0,117.1 149.0,145.4 145.5,146.8" fill="#8c8c90" /><polygon points="127.9,148.1 210.2,149.5 210.2,159.9 127.9,159.9" fill="#38383a" /><polygon points="129.7,140.5 169.0,139.2 170.4,144.0 129.7,146.1" fill="#a4a4a6" /><polygon points="132.4,146.1 168.3,144.7 167.0,156.4 133.8,157.8" fill="#2a2a2c" opacity=".8"/><text x="165.6" y="130" font-family="Liberation Sans, sans-serif" font-size="9.6" fill="#fafafa" textLength="23.4" lengthAdjust="spacingAndGlyphs">TENBO</text><rect x="166.96" y="132.40" width="20.72" height="0.55" fill="#e0e0e0" opacity=".8"/></g><g clip-path="url(#t29c5)"><rect x="210.21" y="101.86" width="83.86" height="58.03" fill="#3b1c0c" /><g filter="url(#t29f)"><rect x="210.21" y="101.86" width="12.02" height="33.85" fill="#f07a14" /><rect x="222.23" y="103.94" width="48.36" height="12.43" fill="#5a2408" /><rect x="223.61" y="113.61" width="16.58" height="13.82" fill="#c8480c" opacity=".8"/><rect x="271.96" y="101.86" width="22.11" height="22.80" fill="#dfe9f2" /><rect x="259.53" y="112.22" width="27.63" height="23.49" fill="#1c1410" /><rect x="210.21" y="135.71" width="83.86" height="24.18" fill="#fff6e2" /><rect x="210.21" y="127.42" width="27.22" height="11.05" fill="#e8a23c" opacity=".8"/><ellipse cx="251.24" cy="156.44" rx="45.59" ry="8.29" fill="#fffdf6" /></g><polygon points="242.9,114.3 250.5,114.3 249.9,127.4 243.6,127.4" fill="#f6f2e6" /><path d="M233.3 127.4 h34.6 v14 a17.3 14.4 0 0 1 -34.6 0 z" fill="#f3efe6"/><ellipse cx="250.55" cy="127.42" rx="17.27" ry="2.21" fill="#fbf8f0" /><path d="M233.6 148.1 q-9 -2 -12.4 -10.4" fill="none" stroke="#efe6d2" stroke-width="1.7"/><ellipse cx="254.69" cy="135.71" rx="4.97" ry="4.42" fill="#d6201c" /><ellipse cx="253.31" cy="135.71" rx="1.93" ry="1.66" fill="#f3efe6" /><rect x="247.09" y="141.93" width="15.20" height="3.45" fill="#2c2420" /><polygon points="254.0,141.9 262.3,141.9 262.3,145.4 254.0,145.4" fill="#d6201c" /></g><text x="64.7" y="169" font-family="Liberation Sans, sans-serif" font-size="3.8" fill="#8a8a8a" textLength="47" lengthAdjust="spacingAndGlyphs">威士忌酒吧标志设计（2015）</text><text x="140.7" y="169" font-family="Liberation Sans, sans-serif" font-size="3.8" fill="#8a8a8a" textLength="55.3" lengthAdjust="spacingAndGlyphs">威士忌酒吧标志应用场景展示（2016）</text><text x="225" y="169" font-family="Liberation Sans, sans-serif" font-size="3.8" fill="#8a8a8a" textLength="55.3" lengthAdjust="spacingAndGlyphs">咖啡馆LOGO及周边应用展示（2016）</text></svg></div>
<div class="a lbl" style="left:1143px;top:976px;">UI<span class="k" style="width:30px">设计</span>&nbsp;<span class="k" style="width:135px">交互设计作品集模板</span>&nbsp;-&nbsp;ilovemockup.club<span class="k" style="width:15px">整</span><br><span class="k" style="width:15px">理</span>29.psd</div>
<div class="a cell" style="left:1517px;top:598px;"></div>
<div class="a th" style="left:1525px;top:681px;"><svg width="342" height="192" viewBox="0 0 342 192"><defs><linearGradient id="t30g" x1="0" y1=".3" x2="1" y2=".8"><stop offset="0" stop-color="#62b8fc"/><stop offset=".5" stop-color="#7090f8"/><stop offset="1" stop-color="#9a63f6"/></linearGradient><linearGradient id="t30h" x1="0" y1="0" x2="1" y2="1"><stop offset="0" stop-color="#4fd2f7"/><stop offset="1" stop-color="#b36af5"/></linearGradient></defs><path d="M184.0 21.8 C177.3 22.3 166.0 25.5 157.3 29.6 C148.6 33.6 138.7 40.9 131.7 46.2 C124.7 51.6 118.8 57.6 115.0 61.8 C111.3 66.1 109.6 67.9 109.2 71.8 C108.9 75.7 110.3 80.3 112.8 85.2 C115.2 90.0 119.1 95.9 123.9 100.7 C128.7 105.6 135.4 110.2 141.7 114.1 C148.0 118.0 155.0 121.4 161.7 124.1 C168.4 126.8 176.2 130.0 181.7 130.2 C187.3 130.4 191.2 128.3 195.1 125.2 C199.0 122.1 202.3 117.4 205.1 111.9 C207.9 106.3 210.2 98.9 211.8 91.8 C213.3 84.8 214.2 76.1 214.5 69.6 C214.9 63.1 215.2 58.3 214.0 52.9 C212.8 47.5 210.1 41.8 207.3 37.4 C204.5 32.9 201.2 28.8 197.3 26.2 C193.4 23.6 190.6 21.2 184.0 21.8 Z" fill="url(#t30g)"/><path d="M184.0 30.5 C179.0 31.1 171.4 32.3 163.9 35.1 C156.5 37.9 146.3 43.5 139.5 47.4 C132.6 51.3 126.7 55.1 122.8 58.5 C118.9 61.8 116.8 63.7 116.1 67.4 C115.5 71.1 116.9 76.1 118.9 80.7 C120.9 85.4 124.4 90.5 128.4 95.2 C132.3 99.8 137.3 104.3 142.8 108.5 C148.4 112.8 155.4 117.3 161.7 120.7 C168.0 124.2 175.3 128.5 180.6 129.2 C185.9 129.9 189.6 128.6 193.4 125.2 C197.2 121.8 200.6 114.4 203.4 108.5 C206.3 102.6 208.4 96.5 210.4 89.6 C212.4 82.8 214.9 74.0 215.3 67.4 C215.8 60.7 214.9 54.7 213.1 49.6 C211.3 44.5 207.7 39.8 204.5 36.8 C201.3 33.8 197.4 32.6 194.0 31.6 C190.5 30.5 189.0 29.9 184.0 30.5 Z" fill="#323232"/><text x="128.4" y="80.3" font-family="Liberation Sans, sans-serif" font-size="19.2" fill="#fff" stroke="#323232" stroke-width=".45" textLength="77" lengthAdjust="spacingAndGlyphs">THANKS</text><text x="160" y="89.2" font-family="Liberation Sans, sans-serif" font-size="3.9" fill="#a8a8a8" textLength="44.6" lengthAdjust="spacing">PERSONAL WORKS</text><text x="174" y="98.6" font-family="Liberation Sans, sans-serif" font-size="4.6" fill="#d8d8d8" textLength="15.6" lengthAdjust="spacingAndGlyphs">作品集</text><text x="193" y="98.6" font-family="Liberation Sans, sans-serif" font-size="3.4" fill="#9a9a9a" textLength="11" lengthAdjust="spacingAndGlyphs">2017</text><polygon points="88.9,150.2 95.3,153.9 95.3,161.3 88.9,165.0 82.5,161.3 82.5,153.9" fill="none" stroke="url(#t30h)" stroke-width=".7"/><g fill="none" stroke="#7aa0f6" stroke-width=".55"><circle cx="88.9" cy="157.8" r="3" /><path d="M87.6 158.6 q1.3 1.2 2.6 0"/></g><polygon points="166.8,150.2 173.2,153.9 173.2,161.3 166.8,165.0 160.4,161.3 160.4,153.9" fill="none" stroke="url(#t30h)" stroke-width=".7"/><g fill="none" stroke="#7aa0f6" stroke-width=".55"><circle cx="166.8" cy="157.8" r="3"/><path d="M165.6 159.4 v-3 h1.6 a.9 .9 0 0 1 0 1.8 h-1.6"/></g><polygon points="246.4,150.2 252.8,153.9 252.8,161.3 246.4,165.0 240.0,161.3 240.0,153.9" fill="none" stroke="url(#t30h)" stroke-width=".7"/><g fill="none" stroke="#7aa0f6" stroke-width=".55"><path d="M242.6 155.6 h7.6 v4.8 h-7.6 z M242.6 155.6 l3.8 2.8 l3.8 -2.8"/></g><text x="75.7" y="172.6" font-family="Liberation Sans, sans-serif" font-size="4.4" fill="#7c7c7c" textLength="24.4" lengthAdjust="spacingAndGlyphs">Luckboo88</text><text x="139.9" y="172.6" font-family="Liberation Sans, sans-serif" font-size="4.4" fill="#6c6c6c" textLength="57.8" lengthAdjust="spacingAndGlyphs">18888888888 / 微信同号</text><text x="223.6" y="172.6" font-family="Liberation Sans, sans-serif" font-size="4.4" fill="#7c7c7c" textLength="49.6" lengthAdjust="spacingAndGlyphs">Luckboo888@Luboo.cn</text></svg></div>
<div class="a lbl" style="left:1517px;top:976px;">UI<span class="k" style="width:30px">设计</span>&nbsp;<span class="k" style="width:135px">交互设计作品集模板</span>&nbsp;-&nbsp;ilovemockup.club<span class="k" style="width:15px">整</span><br><span class="k" style="width:15px">理</span>30.psd</div>

</body>
</html>
